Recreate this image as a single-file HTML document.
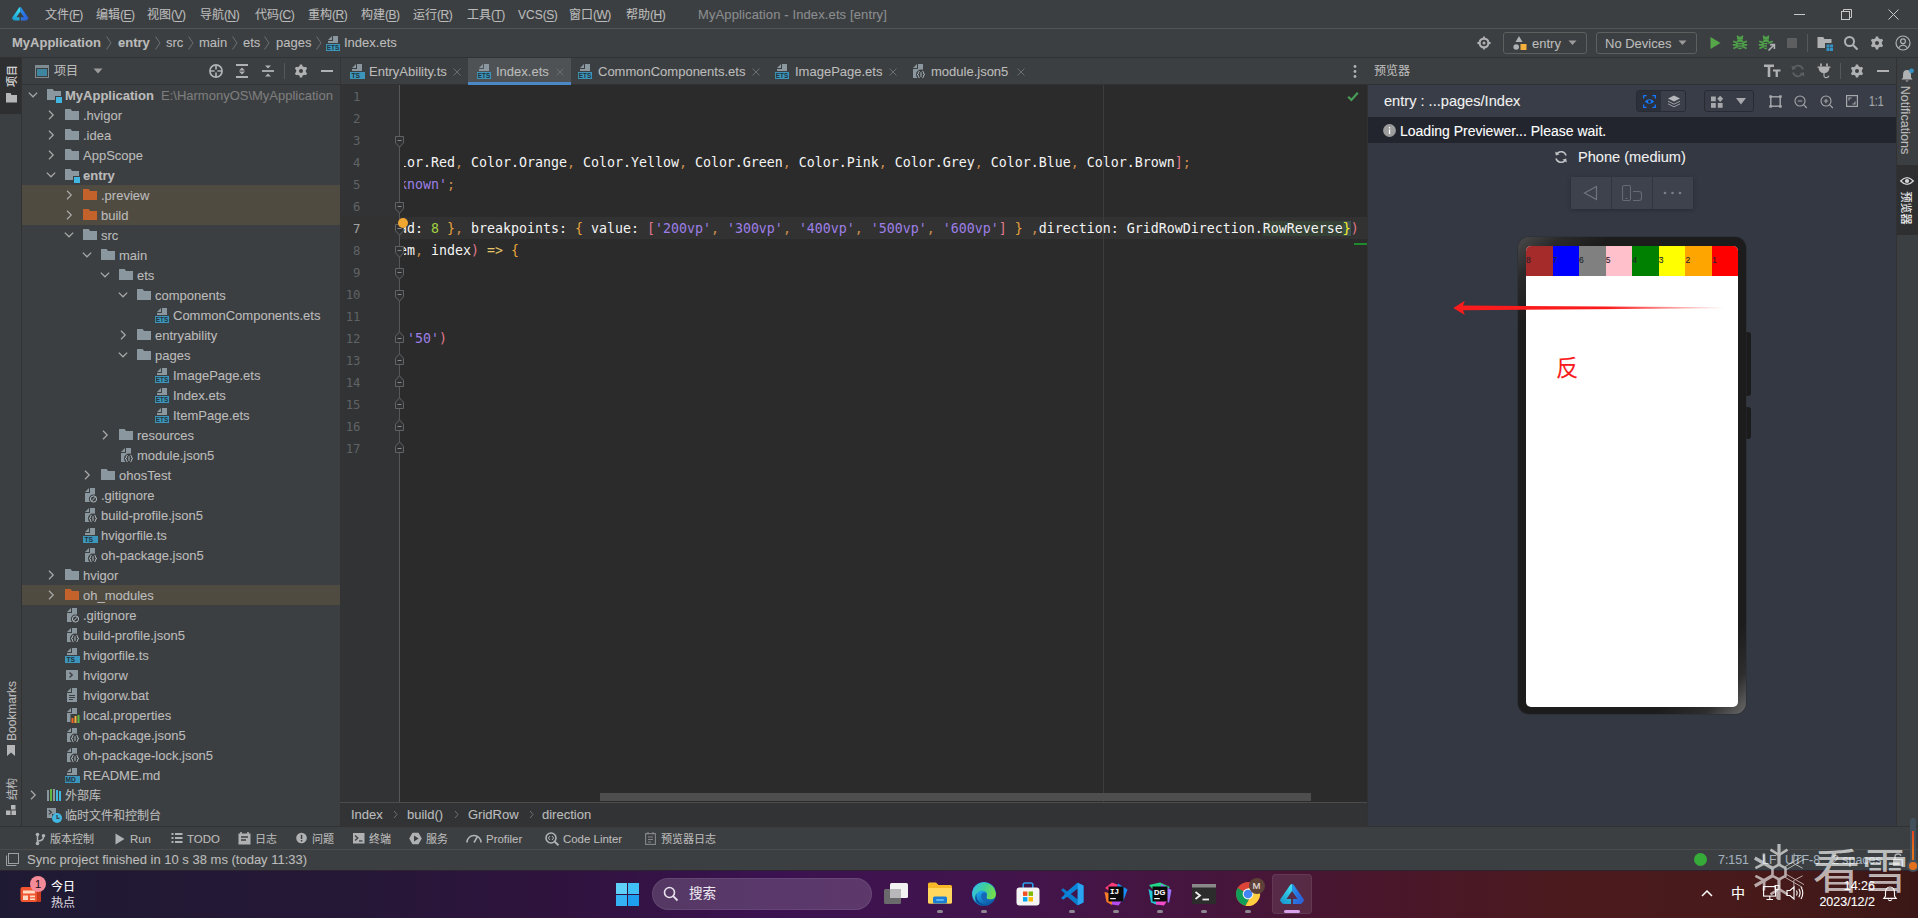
<!DOCTYPE html>
<html lang="zh-CN"><head><meta charset="utf-8"><title>MyApplication - Index.ets [entry]</title>
<style>
*{box-sizing:border-box}
html,body{margin:0;padding:0}
body{width:1918px;height:918px;overflow:hidden;background:#3c3f41;position:relative;font-family:"Liberation Sans","Noto Sans CJK SC",sans-serif;font-size:13px;color:#bbbbbb}
div,svg{position:absolute}
svg{overflow:visible}
.t{white-space:pre;-webkit-text-stroke:0.1px}
.c{white-space:pre;font-family:"DejaVu Sans Mono","Liberation Mono",monospace;font-size:13.29px;line-height:22px;height:22px;color:#f4f4f4}
</style></head>
<body>
<div style="left:0px;top:0px;width:1918px;height:28px;background:#3c3f41"></div>
<svg style="left:11.7px;top:6.9px;" width="16.4" height="13.6" viewBox="0 0 16.4 13.6"><defs><linearGradient id="lgA1" x1="0.6" y1="0" x2="0.2" y2="1"><stop offset="0" stop-color="#3ee0f2"/><stop offset="1" stop-color="#1896cc"/></linearGradient><linearGradient id="lgB1" x1="0" y1="0.3" x2="1" y2="0.8"><stop offset="0" stop-color="#2496e6"/><stop offset="0.5" stop-color="#2b6fe0"/><stop offset="1" stop-color="#2a62d8"/></linearGradient></defs><path d="M8.2,0 L7.2,0.4 L0.2,10.4 Q-0.2,11.2 0.4,11.9 L1.6,13.3 Q1.9,13.6 2.4,13.6 H7.5 V10.2 H4.4 L8.2,4.8 Z" fill="url(#lgA1)"/><path d="M8.2,0 L9.2,0.4 L16.2,10.4 Q16.6,11.2 16,11.9 L14.8,13.3 Q14.5,13.6 14,13.6 H8.9 V10.2 H12 L8.2,4.8 Z" fill="url(#lgB1)"/></svg>
<div class="t" style="left:45px;top:5px;font-size:12px;line-height:20px;height:20px;color:#bbbbbb;">文件<span style="letter-spacing:-0.5px">(<span style="text-decoration:underline;text-underline-offset:2px">F</span>)</span></div>
<div class="t" style="left:96px;top:5px;font-size:12px;line-height:20px;height:20px;color:#bbbbbb;">编辑<span style="letter-spacing:-0.5px">(<span style="text-decoration:underline;text-underline-offset:2px">E</span>)</span></div>
<div class="t" style="left:147px;top:5px;font-size:12px;line-height:20px;height:20px;color:#bbbbbb;">视图<span style="letter-spacing:-0.5px">(<span style="text-decoration:underline;text-underline-offset:2px">V</span>)</span></div>
<div class="t" style="left:200px;top:5px;font-size:12px;line-height:20px;height:20px;color:#bbbbbb;">导航<span style="letter-spacing:-0.5px">(<span style="text-decoration:underline;text-underline-offset:2px">N</span>)</span></div>
<div class="t" style="left:255px;top:5px;font-size:12px;line-height:20px;height:20px;color:#bbbbbb;">代码<span style="letter-spacing:-0.5px">(<span style="text-decoration:underline;text-underline-offset:2px">C</span>)</span></div>
<div class="t" style="left:308px;top:5px;font-size:12px;line-height:20px;height:20px;color:#bbbbbb;">重构<span style="letter-spacing:-0.5px">(<span style="text-decoration:underline;text-underline-offset:2px">R</span>)</span></div>
<div class="t" style="left:361px;top:5px;font-size:12px;line-height:20px;height:20px;color:#bbbbbb;">构建<span style="letter-spacing:-0.5px">(<span style="text-decoration:underline;text-underline-offset:2px">B</span>)</span></div>
<div class="t" style="left:413px;top:5px;font-size:12px;line-height:20px;height:20px;color:#bbbbbb;">运行<span style="letter-spacing:-0.5px">(<span style="text-decoration:underline;text-underline-offset:2px">R</span>)</span></div>
<div class="t" style="left:467px;top:5px;font-size:12px;line-height:20px;height:20px;color:#bbbbbb;">工具<span style="letter-spacing:-0.5px">(<span style="text-decoration:underline;text-underline-offset:2px">T</span>)</span></div>
<div class="t" style="left:518px;top:5px;font-size:12px;line-height:20px;height:20px;color:#bbbbbb;">VCS<span style="letter-spacing:-0.5px">(<span style="text-decoration:underline;text-underline-offset:2px">S</span>)</span></div>
<div class="t" style="left:569px;top:5px;font-size:12px;line-height:20px;height:20px;color:#bbbbbb;">窗口<span style="letter-spacing:-0.5px">(<span style="text-decoration:underline;text-underline-offset:2px">W</span>)</span></div>
<div class="t" style="left:626px;top:5px;font-size:12px;line-height:20px;height:20px;color:#bbbbbb;">帮助<span style="letter-spacing:-0.5px">(<span style="text-decoration:underline;text-underline-offset:2px">H</span>)</span></div>
<div class="t" style="left:698px;top:5px;font-size:13px;line-height:20px;height:20px;color:#8b8d8f;letter-spacing:0.12px">MyApplication - Index.ets [entry]</div>
<div style="left:1794px;top:14px;width:11px;height:1px;background:#c8c8c8"></div>
<svg style="left:1841px;top:9px;" width="11" height="11" viewBox="0 0 11 11"><path d="M2.5,2.5 V0.5 H10.5 V8.5 H8.5" fill="none" stroke="#c8c8c8" stroke-width="1"/><rect x="0.5" y="2.5" width="8" height="8" fill="none" stroke="#c8c8c8" stroke-width="1"/></svg>
<svg style="left:1888px;top:9px;" width="11" height="11" viewBox="0 0 11 11"><path d="M0.5,0.5 L10.5,10.5 M10.5,0.5 L0.5,10.5" stroke="#c8c8c8" stroke-width="1"/></svg>
<div style="left:0px;top:28px;width:1918px;height:1px;background:#515354"></div>
<div class="t" style="left:12px;top:33px;font-size:13px;line-height:20px;height:20px;color:#bbbbbb;font-weight:bold;">MyApplication</div>
<div class="t" style="left:118px;top:33px;font-size:13px;line-height:20px;height:20px;color:#bbbbbb;font-weight:bold;">entry</div>
<div class="t" style="left:166px;top:33px;font-size:13px;line-height:20px;height:20px;color:#bbbbbb;">src</div>
<div class="t" style="left:199px;top:33px;font-size:13px;line-height:20px;height:20px;color:#bbbbbb;">main</div>
<div class="t" style="left:243px;top:33px;font-size:13px;line-height:20px;height:20px;color:#bbbbbb;">ets</div>
<div class="t" style="left:276px;top:33px;font-size:13px;line-height:20px;height:20px;color:#bbbbbb;">pages</div>
<svg style="left:105px;top:35px;" width="8" height="16" viewBox="0 0 8 16"><path d="M1.5,1.5 L6,8 L1.5,14.5" stroke="#6e7072" stroke-width="1" fill="none"/></svg>
<svg style="left:154px;top:35px;" width="8" height="16" viewBox="0 0 8 16"><path d="M1.5,1.5 L6,8 L1.5,14.5" stroke="#6e7072" stroke-width="1" fill="none"/></svg>
<svg style="left:187px;top:35px;" width="8" height="16" viewBox="0 0 8 16"><path d="M1.5,1.5 L6,8 L1.5,14.5" stroke="#6e7072" stroke-width="1" fill="none"/></svg>
<svg style="left:231px;top:35px;" width="8" height="16" viewBox="0 0 8 16"><path d="M1.5,1.5 L6,8 L1.5,14.5" stroke="#6e7072" stroke-width="1" fill="none"/></svg>
<svg style="left:263px;top:35px;" width="8" height="16" viewBox="0 0 8 16"><path d="M1.5,1.5 L6,8 L1.5,14.5" stroke="#6e7072" stroke-width="1" fill="none"/></svg>
<svg style="left:315px;top:35px;" width="8" height="16" viewBox="0 0 8 16"><path d="M1.5,1.5 L6,8 L1.5,14.5" stroke="#6e7072" stroke-width="1" fill="none"/></svg>
<svg style="left:325px;top:35px" width="16" height="16" viewBox="0 0 16 16"><path d="M7,1 L3,5 H7 Z" fill="#8a979e"/><path d="M8,1 V6 H3 V8 H13 V1 Z" fill="#8a979e"/><rect x="1" y="9" width="14" height="7" fill="#3c95ba"/><text x="8.0" y="15" text-anchor="middle" font-family="Liberation Sans,sans-serif" font-weight="bold" font-size="6.4" fill="#22323b">ETS</text></svg>
<div class="t" style="left:344px;top:33px;font-size:13px;line-height:20px;height:20px;color:#bbbbbb;">Index.ets</div>
<svg style="left:1476px;top:35px;" width="16" height="16" viewBox="0 0 16 16"><circle cx="8" cy="8" r="4.4" fill="none" stroke="#afb1b3" stroke-width="2.2"/><circle cx="8" cy="8" r="1.5" fill="#afb1b3"/><path d="M8,1.4 V3 M8,13 V14.6 M1.4,8 H3 M13,8 H14.6" stroke="#afb1b3" stroke-width="1.8"/></svg>
<div style="left:1503px;top:32px;width:84px;height:22px;border:1px solid #5e6060;border-radius:3px"></div>
<svg style="left:1512px;top:35px;" width="16" height="16" viewBox="0 0 16 16"><path d="M7,1 L10.5,7 H3.5 Z" fill="#afb1b3"/><circle cx="4.2" cy="12" r="2.8" fill="#afb1b3"/><rect x="8.5" y="9" width="6" height="6" fill="#f4af3d"/></svg>
<div class="t" style="left:1532px;top:34px;font-size:13px;line-height:20px;height:20px;color:#bbbbbb;">entry</div>
<svg style="left:1568px;top:40px;" width="9" height="6" viewBox="0 0 9 6"><path d="M0.5,0.5 H8.5 L4.5,5 Z" fill="#9b9b9b"/></svg>
<div style="left:1596px;top:32px;width:101px;height:22px;border:1px solid #5e6060;border-radius:3px"></div>
<div class="t" style="left:1605px;top:34px;font-size:13px;line-height:20px;height:20px;color:#bbbbbb;">No Devices</div>
<svg style="left:1678px;top:40px;" width="9" height="6" viewBox="0 0 9 6"><path d="M0.5,0.5 H8.5 L4.5,5 Z" fill="#9b9b9b"/></svg>
<svg style="left:1707px;top:35px;" width="16" height="16" viewBox="0 0 16 16"><path d="M3.5,2 L13.5,8 L3.5,14 Z" fill="#57a64a"/></svg>
<svg style="left:1732px;top:35px;" width="16" height="16" viewBox="0 0 16 16"><ellipse cx="8" cy="9.3" rx="4.1" ry="5" fill="#4fa24a"/><path d="M4.9,4.4 A3.1,2.8 0 0 1 11.1,4.4 Z" fill="#4fa24a"/><path d="M1.2,6.2 L4.6,7.6 M0.8,9.8 H4.4 M1.4,13.6 L4.8,11.8 M14.8,6.2 L11.4,7.6 M15.2,9.8 H11.6 M14.6,13.6 L11.2,11.8 M5.2,0.8 L6.6,3 M10.8,0.8 L9.4,3" stroke="#4fa24a" stroke-width="1.7"/><path d="M5.6,7.4 H10.4 M5.6,9.8 H10.4 M5.6,12.2 H10.4" stroke="#3c3f41" stroke-width="1"/></svg>
<svg style="left:1758px;top:35px;" width="18" height="16" viewBox="0 0 18 16"><ellipse cx="8" cy="9.3" rx="4.1" ry="5" fill="#4fa24a"/><path d="M4.9,4.4 A3.1,2.8 0 0 1 11.1,4.4 Z" fill="#4fa24a"/><path d="M1.2,6.2 L4.6,7.6 M0.8,9.8 H4.4 M1.4,13.6 L4.8,11.8 M14.8,6.2 L11.4,7.6 M15.2,9.8 H11.6 M14.6,13.6 L11.2,11.8 M5.2,0.8 L6.6,3 M10.8,0.8 L9.4,3" stroke="#4fa24a" stroke-width="1.7"/><path d="M5.6,7.4 H10.4 M5.6,9.8 H10.4 M5.6,12.2 H10.4" stroke="#3c3f41" stroke-width="1"/><rect x="9" y="8.5" width="9" height="8" fill="#3c3f41"/><path d="M10.5,15.5 L16,10 M12,9.6 H16.4 V14" stroke="#afb1b3" stroke-width="1.6" fill="none"/></svg>
<div style="left:1787px;top:38px;width:10px;height:10px;background:#5c5e60"></div>
<div style="left:1807px;top:34px;width:1px;height:18px;background:#555759"></div>
<svg style="left:1817px;top:35px;" width="16" height="16" viewBox="0 0 16 16"><path d="M0.5,13 H8 V8 H14.5 V4 H7.5 L6.2,2 H0.5 Z" fill="#afb1b3"/><rect x="9.5" y="9.5" width="3" height="3" fill="#3592c4"/><rect x="13" y="9.5" width="3" height="3" fill="#3592c4"/><rect x="9.5" y="13" width="3" height="3" fill="#3592c4"/><rect x="13" y="13" width="3" height="3" fill="#3592c4"/></svg>
<svg style="left:1843px;top:35px;" width="16" height="16" viewBox="0 0 16 16"><circle cx="6.5" cy="6.5" r="4.5" fill="none" stroke="#afb1b3" stroke-width="2"/><path d="M10,10 L14.5,14.5" stroke="#afb1b3" stroke-width="2.2"/></svg>
<svg style="left:1869px;top:35px;" width="16" height="16" viewBox="0 0 16 16"><path d="M6.3,4 L6.9,1.6 H9.1 L9.7,4 Z" fill="#afb1b3" transform="rotate(0 8 8)"/><path d="M6.3,4 L6.9,1.6 H9.1 L9.7,4 Z" fill="#afb1b3" transform="rotate(60 8 8)"/><path d="M6.3,4 L6.9,1.6 H9.1 L9.7,4 Z" fill="#afb1b3" transform="rotate(120 8 8)"/><path d="M6.3,4 L6.9,1.6 H9.1 L9.7,4 Z" fill="#afb1b3" transform="rotate(180 8 8)"/><path d="M6.3,4 L6.9,1.6 H9.1 L9.7,4 Z" fill="#afb1b3" transform="rotate(240 8 8)"/><path d="M6.3,4 L6.9,1.6 H9.1 L9.7,4 Z" fill="#afb1b3" transform="rotate(300 8 8)"/><circle cx="8" cy="8" r="4.9" fill="#afb1b3"/><circle cx="8" cy="8" r="2" fill="#3c3f41"/></svg>
<svg style="left:1895px;top:35px;" width="16" height="16" viewBox="0 0 16 16"><circle cx="8" cy="8" r="7" fill="none" stroke="#afb1b3" stroke-width="1.2"/><circle cx="8" cy="6.2" r="2.4" fill="none" stroke="#afb1b3" stroke-width="1.2"/><path d="M3.6,12.8 Q8,7.5 12.4,12.8" fill="none" stroke="#afb1b3" stroke-width="1.2"/></svg>
<div style="left:0px;top:57px;width:1918px;height:1px;background:#323232"></div>
<div style="left:0px;top:58px;width:22px;height:768px;background:#3c3f41"></div>
<div style="left:0px;top:58px;width:21px;height:56px;background:#2d2f30"></div>
<div style="left:21px;top:58px;width:1px;height:768px;background:#323232"></div>
<div class="t" style="left:-38.5px;top:66.0px;width:100px;height:20px;text-align:center;font-size:11px;line-height:20px;color:#e0e0e0;transform:rotate(-90deg);">项目</div>
<svg style="left:6px;top:93px;" width="11" height="9.5" viewBox="0 0 11 9.5"><path d="M0,9.5 H11 V2 H5.5 L4.5,0 H0 Z" fill="#b4b6b8"/></svg>
<div class="t" style="left:-38.5px;top:701.0px;width:100px;height:20px;text-align:center;font-size:12px;line-height:20px;color:#bbbbbb;transform:rotate(-90deg);">Bookmarks</div>
<svg style="left:7px;top:745px;" width="8" height="11" viewBox="0 0 8 11"><path d="M0,0 H8 V11 L4,7.6 L0,11 Z" fill="#b4b6b8"/></svg>
<div class="t" style="left:-38.5px;top:779.0px;width:100px;height:20px;text-align:center;font-size:11px;line-height:20px;color:#bbbbbb;transform:rotate(-90deg);">结构</div>
<svg style="left:6px;top:805px;" width="10" height="10" viewBox="0 0 10 10"><rect x="5" y="0" width="4.5" height="4.5" fill="#b4b6b8"/><rect x="0" y="5.5" width="4.5" height="4.5" fill="#b4b6b8"/><rect x="5.5" y="5.5" width="4.5" height="4.5" fill="#b4b6b8"/></svg>
<div style="left:22px;top:58px;width:318px;height:768px;background:#3c3f41"></div>
<svg style="left:35px;top:65px;" width="14" height="13" viewBox="0 0 14 13"><rect x="0" y="0" width="14" height="13" fill="#7f8b91"/><rect x="1" y="3" width="12" height="9" fill="#3c3f41"/><rect x="2" y="4" width="10" height="7" fill="#3e86a0"/></svg>
<div class="t" style="left:54px;top:61px;font-size:12px;line-height:20px;height:20px;color:#bbbbbb;">项目</div>
<svg style="left:93px;top:68px;" width="10" height="6" viewBox="0 0 10 6"><path d="M0.5,0.5 H9.5 L5,5.5 Z" fill="#9b9b9b"/></svg>
<svg style="left:208px;top:63px;" width="16" height="16" viewBox="0 0 16 16"><circle cx="8" cy="8" r="6.1" fill="none" stroke="#afb1b3" stroke-width="1.7"/><path d="M8,2 V6.6 M8,9.4 V14 M2,8 H6.6 M9.4,8 H14" stroke="#afb1b3" stroke-width="1.7"/></svg>
<svg style="left:234px;top:63px;" width="16" height="16" viewBox="0 0 16 16"><path d="M2,2 H14 M2,14 H14" stroke="#afb1b3" stroke-width="1.8"/><path d="M8,4.6 L11,7.4 H5 Z M8,11.4 L11,8.6 H5 Z" fill="#afb1b3"/></svg>
<svg style="left:260px;top:63px;" width="16" height="16" viewBox="0 0 16 16"><path d="M2,8 H14" stroke="#afb1b3" stroke-width="1.8"/><path d="M8,5.6 L11,2.6 H5 Z M8,10.4 L11,13.4 H5 Z" fill="#afb1b3"/></svg>
<div style="left:284px;top:63px;width:1px;height:16px;background:#555759"></div>
<svg style="left:293px;top:63px;" width="16" height="16" viewBox="0 0 16 16"><path d="M6.3,4 L6.9,1.6 H9.1 L9.7,4 Z" fill="#afb1b3" transform="rotate(0 8 8)"/><path d="M6.3,4 L6.9,1.6 H9.1 L9.7,4 Z" fill="#afb1b3" transform="rotate(60 8 8)"/><path d="M6.3,4 L6.9,1.6 H9.1 L9.7,4 Z" fill="#afb1b3" transform="rotate(120 8 8)"/><path d="M6.3,4 L6.9,1.6 H9.1 L9.7,4 Z" fill="#afb1b3" transform="rotate(180 8 8)"/><path d="M6.3,4 L6.9,1.6 H9.1 L9.7,4 Z" fill="#afb1b3" transform="rotate(240 8 8)"/><path d="M6.3,4 L6.9,1.6 H9.1 L9.7,4 Z" fill="#afb1b3" transform="rotate(300 8 8)"/><circle cx="8" cy="8" r="4.9" fill="#afb1b3"/><circle cx="8" cy="8" r="2" fill="#3c3f41"/></svg>
<div style="left:321px;top:70px;width:12px;height:2px;background:#afb1b3"></div>
<div style="left:22px;top:84px;width:318px;height:1px;background:#323232"></div>
<svg style="left:25px;top:87px" width="16" height="16" viewBox="0 0 16 16"><path d="M3.8,5.6 L8,9.8 L12.2,5.6" stroke="#a8a8a8" stroke-width="1.25" fill="none"/></svg>
<svg style="left:46px;top:87px" width="16" height="16" viewBox="0 0 16 16"><path d="M1,13 H9 V9 H15 V4 H8 L6.7,2 H1 Z" fill="#8a979e"/><rect x="10" y="10" width="6" height="6" fill="#40b6e0"/></svg>
<div class="t" style="left:65px;top:86px;font-size:13px;line-height:20px;height:20px;color:#bbbbbb;font-weight:bold;">MyApplication</div>
<div class="t" style="left:161px;top:86px;font-size:13px;line-height:20px;height:20px;color:#7d7d7d;">E:\HarmonyOS\MyApplication</div>
<svg style="left:43px;top:107px" width="16" height="16" viewBox="0 0 16 16"><path d="M6,3.8 L10.2,8 L6,12.2" stroke="#a8a8a8" stroke-width="1.25" fill="none"/></svg>
<svg style="left:64px;top:107px" width="16" height="16" viewBox="0 0 16 16"><path d="M1,13 H15 V4 H8 L6.7,2 H1 Z" fill="#8a979e"/></svg>
<div class="t" style="left:83px;top:106px;font-size:13px;line-height:20px;height:20px;color:#bbbbbb;">.hvigor</div>
<svg style="left:43px;top:127px" width="16" height="16" viewBox="0 0 16 16"><path d="M6,3.8 L10.2,8 L6,12.2" stroke="#a8a8a8" stroke-width="1.25" fill="none"/></svg>
<svg style="left:64px;top:127px" width="16" height="16" viewBox="0 0 16 16"><path d="M1,13 H15 V4 H8 L6.7,2 H1 Z" fill="#8a979e"/></svg>
<div class="t" style="left:83px;top:126px;font-size:13px;line-height:20px;height:20px;color:#bbbbbb;">.idea</div>
<svg style="left:43px;top:147px" width="16" height="16" viewBox="0 0 16 16"><path d="M6,3.8 L10.2,8 L6,12.2" stroke="#a8a8a8" stroke-width="1.25" fill="none"/></svg>
<svg style="left:64px;top:147px" width="16" height="16" viewBox="0 0 16 16"><path d="M1,13 H15 V4 H8 L6.7,2 H1 Z" fill="#8a979e"/></svg>
<div class="t" style="left:83px;top:146px;font-size:13px;line-height:20px;height:20px;color:#bbbbbb;">AppScope</div>
<svg style="left:43px;top:167px" width="16" height="16" viewBox="0 0 16 16"><path d="M3.8,5.6 L8,9.8 L12.2,5.6" stroke="#a8a8a8" stroke-width="1.25" fill="none"/></svg>
<svg style="left:64px;top:167px" width="16" height="16" viewBox="0 0 16 16"><path d="M1,13 H9 V9 H15 V4 H8 L6.7,2 H1 Z" fill="#8a979e"/><rect x="10" y="10" width="6" height="6" fill="#40b6e0"/></svg>
<div class="t" style="left:83px;top:166px;font-size:13px;line-height:20px;height:20px;color:#bbbbbb;font-weight:bold;">entry</div>
<div style="left:22px;top:185px;width:318px;height:20px;background:#4f4b41"></div>
<svg style="left:61px;top:187px" width="16" height="16" viewBox="0 0 16 16"><path d="M6,3.8 L10.2,8 L6,12.2" stroke="#a8a8a8" stroke-width="1.25" fill="none"/></svg>
<svg style="left:82px;top:187px" width="16" height="16" viewBox="0 0 16 16"><path d="M1,13 H15 V4 H8 L6.7,2 H1 Z" fill="#c4622c"/></svg>
<div class="t" style="left:101px;top:186px;font-size:13px;line-height:20px;height:20px;color:#bbbbbb;">.preview</div>
<div style="left:22px;top:205px;width:318px;height:20px;background:#4f4b41"></div>
<svg style="left:61px;top:207px" width="16" height="16" viewBox="0 0 16 16"><path d="M6,3.8 L10.2,8 L6,12.2" stroke="#a8a8a8" stroke-width="1.25" fill="none"/></svg>
<svg style="left:82px;top:207px" width="16" height="16" viewBox="0 0 16 16"><path d="M1,13 H15 V4 H8 L6.7,2 H1 Z" fill="#c4622c"/></svg>
<div class="t" style="left:101px;top:206px;font-size:13px;line-height:20px;height:20px;color:#bbbbbb;">build</div>
<svg style="left:61px;top:227px" width="16" height="16" viewBox="0 0 16 16"><path d="M3.8,5.6 L8,9.8 L12.2,5.6" stroke="#a8a8a8" stroke-width="1.25" fill="none"/></svg>
<svg style="left:82px;top:227px" width="16" height="16" viewBox="0 0 16 16"><path d="M1,13 H15 V4 H8 L6.7,2 H1 Z" fill="#8a979e"/></svg>
<div class="t" style="left:101px;top:226px;font-size:13px;line-height:20px;height:20px;color:#bbbbbb;">src</div>
<svg style="left:79px;top:247px" width="16" height="16" viewBox="0 0 16 16"><path d="M3.8,5.6 L8,9.8 L12.2,5.6" stroke="#a8a8a8" stroke-width="1.25" fill="none"/></svg>
<svg style="left:100px;top:247px" width="16" height="16" viewBox="0 0 16 16"><path d="M1,13 H15 V4 H8 L6.7,2 H1 Z" fill="#8a979e"/></svg>
<div class="t" style="left:119px;top:246px;font-size:13px;line-height:20px;height:20px;color:#bbbbbb;">main</div>
<svg style="left:97px;top:267px" width="16" height="16" viewBox="0 0 16 16"><path d="M3.8,5.6 L8,9.8 L12.2,5.6" stroke="#a8a8a8" stroke-width="1.25" fill="none"/></svg>
<svg style="left:118px;top:267px" width="16" height="16" viewBox="0 0 16 16"><path d="M1,13 H15 V4 H8 L6.7,2 H1 Z" fill="#8a979e"/></svg>
<div class="t" style="left:137px;top:266px;font-size:13px;line-height:20px;height:20px;color:#bbbbbb;">ets</div>
<svg style="left:115px;top:287px" width="16" height="16" viewBox="0 0 16 16"><path d="M3.8,5.6 L8,9.8 L12.2,5.6" stroke="#a8a8a8" stroke-width="1.25" fill="none"/></svg>
<svg style="left:136px;top:287px" width="16" height="16" viewBox="0 0 16 16"><path d="M1,13 H15 V4 H8 L6.7,2 H1 Z" fill="#8a979e"/></svg>
<div class="t" style="left:155px;top:286px;font-size:13px;line-height:20px;height:20px;color:#bbbbbb;">components</div>
<svg style="left:154px;top:307px" width="16" height="16" viewBox="0 0 16 16"><path d="M7,1 L3,5 H7 Z" fill="#8a979e"/><path d="M8,1 V6 H3 V8 H13 V1 Z" fill="#8a979e"/><rect x="1" y="9" width="14" height="7" fill="#3c95ba"/><text x="8.0" y="15" text-anchor="middle" font-family="Liberation Sans,sans-serif" font-weight="bold" font-size="6.4" fill="#22323b">ETS</text></svg>
<div class="t" style="left:173px;top:306px;font-size:13px;line-height:20px;height:20px;color:#bbbbbb;">CommonComponents.ets</div>
<svg style="left:115px;top:327px" width="16" height="16" viewBox="0 0 16 16"><path d="M6,3.8 L10.2,8 L6,12.2" stroke="#a8a8a8" stroke-width="1.25" fill="none"/></svg>
<svg style="left:136px;top:327px" width="16" height="16" viewBox="0 0 16 16"><path d="M1,13 H15 V4 H8 L6.7,2 H1 Z" fill="#8a979e"/></svg>
<div class="t" style="left:155px;top:326px;font-size:13px;line-height:20px;height:20px;color:#bbbbbb;">entryability</div>
<svg style="left:115px;top:347px" width="16" height="16" viewBox="0 0 16 16"><path d="M3.8,5.6 L8,9.8 L12.2,5.6" stroke="#a8a8a8" stroke-width="1.25" fill="none"/></svg>
<svg style="left:136px;top:347px" width="16" height="16" viewBox="0 0 16 16"><path d="M1,13 H15 V4 H8 L6.7,2 H1 Z" fill="#8a979e"/></svg>
<div class="t" style="left:155px;top:346px;font-size:13px;line-height:20px;height:20px;color:#bbbbbb;">pages</div>
<svg style="left:154px;top:367px" width="16" height="16" viewBox="0 0 16 16"><path d="M7,1 L3,5 H7 Z" fill="#8a979e"/><path d="M8,1 V6 H3 V8 H13 V1 Z" fill="#8a979e"/><rect x="1" y="9" width="14" height="7" fill="#3c95ba"/><text x="8.0" y="15" text-anchor="middle" font-family="Liberation Sans,sans-serif" font-weight="bold" font-size="6.4" fill="#22323b">ETS</text></svg>
<div class="t" style="left:173px;top:366px;font-size:13px;line-height:20px;height:20px;color:#bbbbbb;">ImagePage.ets</div>
<svg style="left:154px;top:387px" width="16" height="16" viewBox="0 0 16 16"><path d="M7,1 L3,5 H7 Z" fill="#8a979e"/><path d="M8,1 V6 H3 V8 H13 V1 Z" fill="#8a979e"/><rect x="1" y="9" width="14" height="7" fill="#3c95ba"/><text x="8.0" y="15" text-anchor="middle" font-family="Liberation Sans,sans-serif" font-weight="bold" font-size="6.4" fill="#22323b">ETS</text></svg>
<div class="t" style="left:173px;top:386px;font-size:13px;line-height:20px;height:20px;color:#bbbbbb;">Index.ets</div>
<svg style="left:154px;top:407px" width="16" height="16" viewBox="0 0 16 16"><path d="M7,1 L3,5 H7 Z" fill="#8a979e"/><path d="M8,1 V6 H3 V8 H13 V1 Z" fill="#8a979e"/><rect x="1" y="9" width="14" height="7" fill="#3c95ba"/><text x="8.0" y="15" text-anchor="middle" font-family="Liberation Sans,sans-serif" font-weight="bold" font-size="6.4" fill="#22323b">ETS</text></svg>
<div class="t" style="left:173px;top:406px;font-size:13px;line-height:20px;height:20px;color:#bbbbbb;">ItemPage.ets</div>
<svg style="left:97px;top:427px" width="16" height="16" viewBox="0 0 16 16"><path d="M6,3.8 L10.2,8 L6,12.2" stroke="#a8a8a8" stroke-width="1.25" fill="none"/></svg>
<svg style="left:118px;top:427px" width="16" height="16" viewBox="0 0 16 16"><path d="M1,13 H15 V4 H8 L6.7,2 H1 Z" fill="#8a979e"/></svg>
<div class="t" style="left:137px;top:426px;font-size:13px;line-height:20px;height:20px;color:#bbbbbb;">resources</div>
<svg style="left:118px;top:447px" width="16" height="16" viewBox="0 0 16 16"><path d="M7,1 L3,5 H7 Z" fill="#8a979e"/><path d="M8,1 V6 H3 V15 H13 V1 Z" fill="#8a979e"/><circle cx="11" cy="11.5" r="5" fill="#3c3f41"/><path d="M9.6,8.3 Q8.3,8.3 8.4,9.8 Q8.5,11.4 7.2,11.5 Q8.5,11.6 8.4,13.2 Q8.3,14.7 9.6,14.7 M12.4,8.3 Q13.7,8.3 13.6,9.8 Q13.5,11.4 14.8,11.5 Q13.5,11.6 13.6,13.2 Q13.7,14.7 12.4,14.7" stroke="#aeb9c0" stroke-width="1" fill="none"/><rect x="10.5" y="9.2" width="1" height="4.6" fill="#aeb9c0"/></svg>
<div class="t" style="left:137px;top:446px;font-size:13px;line-height:20px;height:20px;color:#bbbbbb;">module.json5</div>
<svg style="left:79px;top:467px" width="16" height="16" viewBox="0 0 16 16"><path d="M6,3.8 L10.2,8 L6,12.2" stroke="#a8a8a8" stroke-width="1.25" fill="none"/></svg>
<svg style="left:100px;top:467px" width="16" height="16" viewBox="0 0 16 16"><path d="M1,13 H15 V4 H8 L6.7,2 H1 Z" fill="#8a979e"/></svg>
<div class="t" style="left:119px;top:466px;font-size:13px;line-height:20px;height:20px;color:#bbbbbb;">ohosTest</div>
<svg style="left:82px;top:487px" width="16" height="16" viewBox="0 0 16 16"><path d="M7,1 L3,5 H7 Z" fill="#8a979e"/><path d="M8,1 V6 H3 V15 H13 V1 Z" fill="#8a979e"/><circle cx="11.5" cy="12" r="4.6" fill="#3c3f41"/><circle cx="11.5" cy="12" r="3.1" stroke="#aeb9c0" stroke-width="1" fill="none"/><path d="M9.4,14.1 L13.6,9.9" stroke="#aeb9c0" stroke-width="1"/></svg>
<div class="t" style="left:101px;top:486px;font-size:13px;line-height:20px;height:20px;color:#bbbbbb;">.gitignore</div>
<svg style="left:82px;top:507px" width="16" height="16" viewBox="0 0 16 16"><path d="M7,1 L3,5 H7 Z" fill="#8a979e"/><path d="M8,1 V6 H3 V15 H13 V1 Z" fill="#8a979e"/><circle cx="11" cy="11.5" r="5" fill="#3c3f41"/><path d="M9.6,8.3 Q8.3,8.3 8.4,9.8 Q8.5,11.4 7.2,11.5 Q8.5,11.6 8.4,13.2 Q8.3,14.7 9.6,14.7 M12.4,8.3 Q13.7,8.3 13.6,9.8 Q13.5,11.4 14.8,11.5 Q13.5,11.6 13.6,13.2 Q13.7,14.7 12.4,14.7" stroke="#aeb9c0" stroke-width="1" fill="none"/><rect x="10.5" y="9.2" width="1" height="4.6" fill="#aeb9c0"/></svg>
<div class="t" style="left:101px;top:506px;font-size:13px;line-height:20px;height:20px;color:#bbbbbb;">build-profile.json5</div>
<svg style="left:82px;top:527px" width="16" height="16" viewBox="0 0 16 16"><path d="M7,1 L3,5 H7 Z" fill="#8a979e"/><path d="M8,1 V6 H3 V8 H13 V1 Z" fill="#8a979e"/><rect x="1" y="9" width="15" height="7" fill="#3c95ba"/><text x="6.6" y="15" text-anchor="middle" font-family="Liberation Sans,sans-serif" font-weight="bold" font-size="6.6" fill="#22323b">TS</text></svg>
<div class="t" style="left:101px;top:526px;font-size:13px;line-height:20px;height:20px;color:#bbbbbb;">hvigorfile.ts</div>
<svg style="left:82px;top:547px" width="16" height="16" viewBox="0 0 16 16"><path d="M7,1 L3,5 H7 Z" fill="#8a979e"/><path d="M8,1 V6 H3 V15 H13 V1 Z" fill="#8a979e"/><circle cx="11" cy="11.5" r="5" fill="#3c3f41"/><path d="M9.6,8.3 Q8.3,8.3 8.4,9.8 Q8.5,11.4 7.2,11.5 Q8.5,11.6 8.4,13.2 Q8.3,14.7 9.6,14.7 M12.4,8.3 Q13.7,8.3 13.6,9.8 Q13.5,11.4 14.8,11.5 Q13.5,11.6 13.6,13.2 Q13.7,14.7 12.4,14.7" stroke="#aeb9c0" stroke-width="1" fill="none"/><rect x="10.5" y="9.2" width="1" height="4.6" fill="#aeb9c0"/></svg>
<div class="t" style="left:101px;top:546px;font-size:13px;line-height:20px;height:20px;color:#bbbbbb;">oh-package.json5</div>
<svg style="left:43px;top:567px" width="16" height="16" viewBox="0 0 16 16"><path d="M6,3.8 L10.2,8 L6,12.2" stroke="#a8a8a8" stroke-width="1.25" fill="none"/></svg>
<svg style="left:64px;top:567px" width="16" height="16" viewBox="0 0 16 16"><path d="M1,13 H15 V4 H8 L6.7,2 H1 Z" fill="#8a979e"/></svg>
<div class="t" style="left:83px;top:566px;font-size:13px;line-height:20px;height:20px;color:#bbbbbb;">hvigor</div>
<div style="left:22px;top:585px;width:318px;height:20px;background:#4f4b41"></div>
<svg style="left:43px;top:587px" width="16" height="16" viewBox="0 0 16 16"><path d="M6,3.8 L10.2,8 L6,12.2" stroke="#a8a8a8" stroke-width="1.25" fill="none"/></svg>
<svg style="left:64px;top:587px" width="16" height="16" viewBox="0 0 16 16"><path d="M1,13 H15 V4 H8 L6.7,2 H1 Z" fill="#c4622c"/></svg>
<div class="t" style="left:83px;top:586px;font-size:13px;line-height:20px;height:20px;color:#bbbbbb;">oh_modules</div>
<svg style="left:64px;top:607px" width="16" height="16" viewBox="0 0 16 16"><path d="M7,1 L3,5 H7 Z" fill="#8a979e"/><path d="M8,1 V6 H3 V15 H13 V1 Z" fill="#8a979e"/><circle cx="11.5" cy="12" r="4.6" fill="#3c3f41"/><circle cx="11.5" cy="12" r="3.1" stroke="#aeb9c0" stroke-width="1" fill="none"/><path d="M9.4,14.1 L13.6,9.9" stroke="#aeb9c0" stroke-width="1"/></svg>
<div class="t" style="left:83px;top:606px;font-size:13px;line-height:20px;height:20px;color:#bbbbbb;">.gitignore</div>
<svg style="left:64px;top:627px" width="16" height="16" viewBox="0 0 16 16"><path d="M7,1 L3,5 H7 Z" fill="#8a979e"/><path d="M8,1 V6 H3 V15 H13 V1 Z" fill="#8a979e"/><circle cx="11" cy="11.5" r="5" fill="#3c3f41"/><path d="M9.6,8.3 Q8.3,8.3 8.4,9.8 Q8.5,11.4 7.2,11.5 Q8.5,11.6 8.4,13.2 Q8.3,14.7 9.6,14.7 M12.4,8.3 Q13.7,8.3 13.6,9.8 Q13.5,11.4 14.8,11.5 Q13.5,11.6 13.6,13.2 Q13.7,14.7 12.4,14.7" stroke="#aeb9c0" stroke-width="1" fill="none"/><rect x="10.5" y="9.2" width="1" height="4.6" fill="#aeb9c0"/></svg>
<div class="t" style="left:83px;top:626px;font-size:13px;line-height:20px;height:20px;color:#bbbbbb;">build-profile.json5</div>
<svg style="left:64px;top:647px" width="16" height="16" viewBox="0 0 16 16"><path d="M7,1 L3,5 H7 Z" fill="#8a979e"/><path d="M8,1 V6 H3 V8 H13 V1 Z" fill="#8a979e"/><rect x="1" y="9" width="15" height="7" fill="#3c95ba"/><text x="6.6" y="15" text-anchor="middle" font-family="Liberation Sans,sans-serif" font-weight="bold" font-size="6.6" fill="#22323b">TS</text></svg>
<div class="t" style="left:83px;top:646px;font-size:13px;line-height:20px;height:20px;color:#bbbbbb;">hvigorfile.ts</div>
<svg style="left:64px;top:667px" width="16" height="16" viewBox="0 0 16 16"><rect x="2" y="3" width="12" height="10" fill="#8a979e"/><path d="M5.5,5.5 L8.2,8 L5.5,10.5" stroke="#3c3f41" stroke-width="1.4" fill="none"/></svg>
<div class="t" style="left:83px;top:666px;font-size:13px;line-height:20px;height:20px;color:#bbbbbb;">hvigorw</div>
<svg style="left:64px;top:687px" width="16" height="16" viewBox="0 0 16 16"><path d="M7,1 L3,5 H7 Z" fill="#8a979e"/><path d="M8,1 V6 H3 V15 H13 V1 Z" fill="#8a979e"/><path d="M5,8.5 H11 M5,10.5 H11 M5,12.5 H9" stroke="#3c3f41" stroke-width="1"/></svg>
<div class="t" style="left:83px;top:686px;font-size:13px;line-height:20px;height:20px;color:#bbbbbb;">hvigorw.bat</div>
<svg style="left:64px;top:707px" width="16" height="16" viewBox="0 0 16 16"><path d="M7,1 L3,5 H7 Z" fill="#8a979e"/><path d="M8,1 V6 H3 V15 H13 V1 Z" fill="#8a979e"/><rect x="6.5" y="7" width="10" height="9.5" fill="#3c3f41"/><rect x="7.5" y="11" width="2" height="5" fill="#f26522"/><rect x="10.5" y="9" width="2" height="7" fill="#f4af3d"/><rect x="13.5" y="8" width="2" height="8" fill="#62b543"/></svg>
<div class="t" style="left:83px;top:706px;font-size:13px;line-height:20px;height:20px;color:#bbbbbb;">local.properties</div>
<svg style="left:64px;top:727px" width="16" height="16" viewBox="0 0 16 16"><path d="M7,1 L3,5 H7 Z" fill="#8a979e"/><path d="M8,1 V6 H3 V15 H13 V1 Z" fill="#8a979e"/><circle cx="11" cy="11.5" r="5" fill="#3c3f41"/><path d="M9.6,8.3 Q8.3,8.3 8.4,9.8 Q8.5,11.4 7.2,11.5 Q8.5,11.6 8.4,13.2 Q8.3,14.7 9.6,14.7 M12.4,8.3 Q13.7,8.3 13.6,9.8 Q13.5,11.4 14.8,11.5 Q13.5,11.6 13.6,13.2 Q13.7,14.7 12.4,14.7" stroke="#aeb9c0" stroke-width="1" fill="none"/><rect x="10.5" y="9.2" width="1" height="4.6" fill="#aeb9c0"/></svg>
<div class="t" style="left:83px;top:726px;font-size:13px;line-height:20px;height:20px;color:#bbbbbb;">oh-package.json5</div>
<svg style="left:64px;top:747px" width="16" height="16" viewBox="0 0 16 16"><path d="M7,1 L3,5 H7 Z" fill="#8a979e"/><path d="M8,1 V6 H3 V15 H13 V1 Z" fill="#8a979e"/><circle cx="11" cy="11.5" r="5" fill="#3c3f41"/><path d="M9.6,8.3 Q8.3,8.3 8.4,9.8 Q8.5,11.4 7.2,11.5 Q8.5,11.6 8.4,13.2 Q8.3,14.7 9.6,14.7 M12.4,8.3 Q13.7,8.3 13.6,9.8 Q13.5,11.4 14.8,11.5 Q13.5,11.6 13.6,13.2 Q13.7,14.7 12.4,14.7" stroke="#aeb9c0" stroke-width="1" fill="none"/><rect x="10.5" y="9.2" width="1" height="4.6" fill="#aeb9c0"/></svg>
<div class="t" style="left:83px;top:746px;font-size:13px;line-height:20px;height:20px;color:#bbbbbb;">oh-package-lock.json5</div>
<svg style="left:64px;top:767px" width="16" height="16" viewBox="0 0 16 16"><path d="M7,1 L3,5 H7 Z" fill="#8a979e"/><path d="M8,1 V6 H3 V8 H13 V1 Z" fill="#8a979e"/><rect x="1" y="9" width="15" height="7" fill="#3c95ba"/><text x="6.6" y="15" text-anchor="middle" font-family="Liberation Sans,sans-serif" font-weight="bold" font-size="6.6" fill="#22323b">MD</text></svg>
<div class="t" style="left:83px;top:766px;font-size:13px;line-height:20px;height:20px;color:#bbbbbb;">README.md</div>
<svg style="left:25px;top:787px" width="16" height="16" viewBox="0 0 16 16"><path d="M6,3.8 L10.2,8 L6,12.2" stroke="#a8a8a8" stroke-width="1.25" fill="none"/></svg>
<svg style="left:46px;top:787px" width="16" height="16" viewBox="0 0 16 16"><rect x="1" y="3" width="2" height="11" fill="#8a979e"/><rect x="4" y="2" width="2" height="12" fill="#62b543"/><rect x="7" y="2" width="2" height="12" fill="#8a979e"/><rect x="10" y="3" width="2" height="11" fill="#40b6e0"/><rect x="13" y="4" width="2" height="10" fill="#40b6e0"/></svg>
<div class="t" style="left:65px;top:786px;font-size:12px;line-height:20px;height:20px;color:#bbbbbb;">外部库</div>
<svg style="left:46px;top:807px" width="16" height="16" viewBox="0 0 16 16"><path d="M1,1 H10 V7 H6 V11 H1 Z" fill="#8a979e"/><path d="M2.8,3 L5.4,5.2 L2.8,7.4" stroke="#3c3f41" stroke-width="1.2" fill="none"/><circle cx="11" cy="11" r="5" fill="#40b6e0"/><path d="M11,8 V11.3 H13.5" stroke="#3c3f41" stroke-width="1.2" fill="none"/></svg>
<div class="t" style="left:65px;top:806px;font-size:12px;line-height:20px;height:20px;color:#bbbbbb;">临时文件和控制台</div>
<div style="left:340px;top:58px;width:1028px;height:27px;background:#3c3f41"></div>
<div style="left:468px;top:58px;width:103px;height:27px;background:#4e5254"></div>
<svg style="left:349px;top:63px" width="16" height="16" viewBox="0 0 16 16"><path d="M7,1 L3,5 H7 Z" fill="#8a979e"/><path d="M8,1 V6 H3 V8 H13 V1 Z" fill="#8a979e"/><rect x="1" y="9" width="15" height="7" fill="#3c95ba"/><text x="6.6" y="15" text-anchor="middle" font-family="Liberation Sans,sans-serif" font-weight="bold" font-size="6.6" fill="#22323b">TS</text></svg>
<div class="t" style="left:369px;top:62px;font-size:13px;line-height:20px;height:20px;color:#bbbbbb;">EntryAbility.ts</div>
<svg style="left:453px;top:67.5px;" width="8" height="8" viewBox="0 0 8 8"><path d="M0.5,0.5 L7.5,7.5 M7.5,0.5 L0.5,7.5" stroke="#6c6f71" stroke-width="1"/></svg>
<svg style="left:476px;top:63px" width="16" height="16" viewBox="0 0 16 16"><path d="M7,1 L3,5 H7 Z" fill="#8a979e"/><path d="M8,1 V6 H3 V8 H13 V1 Z" fill="#8a979e"/><rect x="1" y="9" width="14" height="7" fill="#3c95ba"/><text x="8.0" y="15" text-anchor="middle" font-family="Liberation Sans,sans-serif" font-weight="bold" font-size="6.4" fill="#22323b">ETS</text></svg>
<div class="t" style="left:496px;top:62px;font-size:13px;line-height:20px;height:20px;color:#bbbbbb;">Index.ets</div>
<svg style="left:556px;top:67.5px;" width="8" height="8" viewBox="0 0 8 8"><path d="M0.5,0.5 L7.5,7.5 M7.5,0.5 L0.5,7.5" stroke="#6c6f71" stroke-width="1"/></svg>
<svg style="left:577px;top:63px" width="16" height="16" viewBox="0 0 16 16"><path d="M7,1 L3,5 H7 Z" fill="#8a979e"/><path d="M8,1 V6 H3 V8 H13 V1 Z" fill="#8a979e"/><rect x="1" y="9" width="14" height="7" fill="#3c95ba"/><text x="8.0" y="15" text-anchor="middle" font-family="Liberation Sans,sans-serif" font-weight="bold" font-size="6.4" fill="#22323b">ETS</text></svg>
<div class="t" style="left:598px;top:62px;font-size:13px;line-height:20px;height:20px;color:#bbbbbb;">CommonComponents.ets</div>
<svg style="left:752px;top:67.5px;" width="8" height="8" viewBox="0 0 8 8"><path d="M0.5,0.5 L7.5,7.5 M7.5,0.5 L0.5,7.5" stroke="#6c6f71" stroke-width="1"/></svg>
<svg style="left:774px;top:63px" width="16" height="16" viewBox="0 0 16 16"><path d="M7,1 L3,5 H7 Z" fill="#8a979e"/><path d="M8,1 V6 H3 V8 H13 V1 Z" fill="#8a979e"/><rect x="1" y="9" width="14" height="7" fill="#3c95ba"/><text x="8.0" y="15" text-anchor="middle" font-family="Liberation Sans,sans-serif" font-weight="bold" font-size="6.4" fill="#22323b">ETS</text></svg>
<div class="t" style="left:795px;top:62px;font-size:13px;line-height:20px;height:20px;color:#bbbbbb;">ImagePage.ets</div>
<svg style="left:889px;top:67.5px;" width="8" height="8" viewBox="0 0 8 8"><path d="M0.5,0.5 L7.5,7.5 M7.5,0.5 L0.5,7.5" stroke="#6c6f71" stroke-width="1"/></svg>
<svg style="left:910px;top:63px" width="16" height="16" viewBox="0 0 16 16"><path d="M7,1 L3,5 H7 Z" fill="#8a979e"/><path d="M8,1 V6 H3 V15 H13 V1 Z" fill="#8a979e"/><circle cx="11" cy="11.5" r="5" fill="#3c3f41"/><path d="M9.6,8.3 Q8.3,8.3 8.4,9.8 Q8.5,11.4 7.2,11.5 Q8.5,11.6 8.4,13.2 Q8.3,14.7 9.6,14.7 M12.4,8.3 Q13.7,8.3 13.6,9.8 Q13.5,11.4 14.8,11.5 Q13.5,11.6 13.6,13.2 Q13.7,14.7 12.4,14.7" stroke="#aeb9c0" stroke-width="1" fill="none"/><rect x="10.5" y="9.2" width="1" height="4.6" fill="#aeb9c0"/></svg>
<div class="t" style="left:931px;top:62px;font-size:13px;line-height:20px;height:20px;color:#bbbbbb;">module.json5</div>
<svg style="left:1017px;top:67.5px;" width="8" height="8" viewBox="0 0 8 8"><path d="M0.5,0.5 L7.5,7.5 M7.5,0.5 L0.5,7.5" stroke="#6c6f71" stroke-width="1"/></svg>
<svg style="left:1353px;top:65px;" width="4" height="13" viewBox="0 0 4 13"><circle cx="2" cy="1.5" r="1.4" fill="#afb1b3"/><circle cx="2" cy="6.5" r="1.4" fill="#afb1b3"/><circle cx="2" cy="11.5" r="1.4" fill="#afb1b3"/></svg>
<div style="left:340px;top:84px;width:1028px;height:1px;background:#323232"></div>
<div style="left:468px;top:82px;width:103px;height:3px;background:#4a88c7"></div>
<div style="left:340px;top:58px;width:1px;height:768px;background:#333537"></div>
<div style="left:340px;top:85px;width:1027px;height:718px;background:#2b2b2b"></div>
<div style="left:340px;top:85px;width:59px;height:718px;background:#313335"></div>
<div style="left:1367px;top:85px;width:1px;height:741px;background:#323232"></div>
<div style="left:340px;top:217px;width:1027px;height:22px;background:#323232"></div>
<div style="left:1103px;top:85px;width:1px;height:718px;background:#3d3d3d"></div>
<div style="left:399px;top:85px;width:1px;height:718px;background:#555759"></div>
<div class="c" style="left:340px;top:86px;width:20.5px;text-align:right;color:#606366;font-size:12.3px">1</div>
<div class="c" style="left:340px;top:108px;width:20.5px;text-align:right;color:#606366;font-size:12.3px">2</div>
<div class="c" style="left:340px;top:130px;width:20.5px;text-align:right;color:#606366;font-size:12.3px">3</div>
<div class="c" style="left:340px;top:152px;width:20.5px;text-align:right;color:#606366;font-size:12.3px">4</div>
<div class="c" style="left:340px;top:174px;width:20.5px;text-align:right;color:#606366;font-size:12.3px">5</div>
<div class="c" style="left:340px;top:196px;width:20.5px;text-align:right;color:#606366;font-size:12.3px">6</div>
<div class="c" style="left:340px;top:218px;width:20.5px;text-align:right;color:#a4a3a3;font-size:12.3px">7</div>
<div class="c" style="left:340px;top:240px;width:20.5px;text-align:right;color:#606366;font-size:12.3px">8</div>
<div class="c" style="left:340px;top:262px;width:20.5px;text-align:right;color:#606366;font-size:12.3px">9</div>
<div class="c" style="left:340px;top:284px;width:20.5px;text-align:right;color:#606366;font-size:12.3px">10</div>
<div class="c" style="left:340px;top:306px;width:20.5px;text-align:right;color:#606366;font-size:12.3px">11</div>
<div class="c" style="left:340px;top:328px;width:20.5px;text-align:right;color:#606366;font-size:12.3px">12</div>
<div class="c" style="left:340px;top:350px;width:20.5px;text-align:right;color:#606366;font-size:12.3px">13</div>
<div class="c" style="left:340px;top:372px;width:20.5px;text-align:right;color:#606366;font-size:12.3px">14</div>
<div class="c" style="left:340px;top:394px;width:20.5px;text-align:right;color:#606366;font-size:12.3px">15</div>
<div class="c" style="left:340px;top:416px;width:20.5px;text-align:right;color:#606366;font-size:12.3px">16</div>
<div class="c" style="left:340px;top:438px;width:20.5px;text-align:right;color:#606366;font-size:12.3px">17</div>
<svg style="left:395.0px;top:136px;" width="9" height="12" viewBox="0 0 9 12"><path d="M0.5,0.5 H8.5 V6.8 L4.5,11.2 L0.5,6.8 Z" fill="#2f3133" stroke="#606365" stroke-width="1"/><path d="M2.5,4.5 H6.5" stroke="#85878a" stroke-width="1"/></svg>
<svg style="left:395.0px;top:202px;" width="9" height="12" viewBox="0 0 9 12"><path d="M0.5,0.5 H8.5 V6.8 L4.5,11.2 L0.5,6.8 Z" fill="#2f3133" stroke="#606365" stroke-width="1"/><path d="M2.5,4.5 H6.5" stroke="#85878a" stroke-width="1"/></svg>
<svg style="left:395.0px;top:224px;" width="9" height="12" viewBox="0 0 9 12"><path d="M0.5,0.5 H8.5 V6.8 L4.5,11.2 L0.5,6.8 Z" fill="#2f3133" stroke="#606365" stroke-width="1"/><path d="M2.5,4.5 H6.5" stroke="#85878a" stroke-width="1"/></svg>
<svg style="left:395.0px;top:246px;" width="9" height="12" viewBox="0 0 9 12"><path d="M0.5,0.5 H8.5 V6.8 L4.5,11.2 L0.5,6.8 Z" fill="#2f3133" stroke="#606365" stroke-width="1"/><path d="M2.5,4.5 H6.5" stroke="#85878a" stroke-width="1"/></svg>
<svg style="left:395.0px;top:268px;" width="9" height="12" viewBox="0 0 9 12"><path d="M0.5,0.5 H8.5 V6.8 L4.5,11.2 L0.5,6.8 Z" fill="#2f3133" stroke="#606365" stroke-width="1"/><path d="M2.5,4.5 H6.5" stroke="#85878a" stroke-width="1"/></svg>
<svg style="left:395.0px;top:290px;" width="9" height="12" viewBox="0 0 9 12"><path d="M0.5,0.5 H8.5 V6.8 L4.5,11.2 L0.5,6.8 Z" fill="#2f3133" stroke="#606365" stroke-width="1"/><path d="M2.5,4.5 H6.5" stroke="#85878a" stroke-width="1"/></svg>
<svg style="left:395.0px;top:331px;" width="9" height="12" viewBox="0 0 9 12"><path d="M0.5,11.5 H8.5 V5.2 L4.5,0.8 L0.5,5.2 Z" fill="#2f3133" stroke="#606365" stroke-width="1"/><path d="M2.5,7.5 H6.5" stroke="#85878a" stroke-width="1"/></svg>
<svg style="left:395.0px;top:353px;" width="9" height="12" viewBox="0 0 9 12"><path d="M0.5,11.5 H8.5 V5.2 L4.5,0.8 L0.5,5.2 Z" fill="#2f3133" stroke="#606365" stroke-width="1"/><path d="M2.5,7.5 H6.5" stroke="#85878a" stroke-width="1"/></svg>
<svg style="left:395.0px;top:375px;" width="9" height="12" viewBox="0 0 9 12"><path d="M0.5,11.5 H8.5 V5.2 L4.5,0.8 L0.5,5.2 Z" fill="#2f3133" stroke="#606365" stroke-width="1"/><path d="M2.5,7.5 H6.5" stroke="#85878a" stroke-width="1"/></svg>
<svg style="left:395.0px;top:397px;" width="9" height="12" viewBox="0 0 9 12"><path d="M0.5,11.5 H8.5 V5.2 L4.5,0.8 L0.5,5.2 Z" fill="#2f3133" stroke="#606365" stroke-width="1"/><path d="M2.5,7.5 H6.5" stroke="#85878a" stroke-width="1"/></svg>
<svg style="left:395.0px;top:419px;" width="9" height="12" viewBox="0 0 9 12"><path d="M0.5,11.5 H8.5 V5.2 L4.5,0.8 L0.5,5.2 Z" fill="#2f3133" stroke="#606365" stroke-width="1"/><path d="M2.5,7.5 H6.5" stroke="#85878a" stroke-width="1"/></svg>
<svg style="left:395.0px;top:441px;" width="9" height="12" viewBox="0 0 9 12"><path d="M0.5,11.5 H8.5 V5.2 L4.5,0.8 L0.5,5.2 Z" fill="#2f3133" stroke="#606365" stroke-width="1"/><path d="M2.5,7.5 H6.5" stroke="#85878a" stroke-width="1"/></svg>
<div style="left:404px;top:85px;width:963px;height:718px;overflow:hidden"><div class="c" style="left:-5px;top:67px"><span style="color:#f4f4f4">l</span><span style="color:#f4f4f4">or.Red</span><span style="color:#cf8e4d">, </span><span style="color:#f4f4f4">Color.Orange</span><span style="color:#cf8e4d">, </span><span style="color:#f4f4f4">Color.Yellow</span><span style="color:#cf8e4d">, </span><span style="color:#f4f4f4">Color.Green</span><span style="color:#cf8e4d">, </span><span style="color:#f4f4f4">Color.Pink</span><span style="color:#cf8e4d">, </span><span style="color:#f4f4f4">Color.Grey</span><span style="color:#cf8e4d">, </span><span style="color:#f4f4f4">Color.Blue</span><span style="color:#cf8e4d">, </span><span style="color:#f4f4f4">Color.Brown</span><span style="color:#e0788a">]</span><span style="color:#cf8e4d">;</span></div><div class="c" style="left:-5px;top:89px"><span style="color:#9d7fe6">known'</span><span style="color:#cf8e4d">;</span></div><div class="c" style="left:-5px;top:133px"><span style="color:#f4f4f4">ad: </span><span style="color:#9fcf3f">8</span> <span style="color:#e8a23c">}</span><span style="color:#cf8e4d">, </span><span style="color:#f4f4f4">breakpoints: </span><span style="color:#e8a23c">{</span><span style="color:#f4f4f4"> value: </span><span style="color:#e0788a">[</span><span style="color:#9d7fe6">'200vp'</span><span style="color:#cf8e4d">, </span><span style="color:#9d7fe6">'300vp'</span><span style="color:#cf8e4d">, </span><span style="color:#9d7fe6">'400vp'</span><span style="color:#cf8e4d">, </span><span style="color:#9d7fe6">'500vp'</span><span style="color:#cf8e4d">, </span><span style="color:#9d7fe6">'600vp'</span><span style="color:#e0788a">]</span> <span style="color:#e8a23c">}</span> <span style="color:#cf8e4d">,</span><span style="color:#f4f4f4">direction: GridRowDirection.</span><span style="background:#344134">RowReverse</span><span style="background:#3b514d;color:#ffef28">}</span><span style="color:#e0788a">)</span></div><div class="c" style="left:-5px;top:155px"><span style="color:#f4f4f4">em</span><span style="color:#cf8e4d">, </span><span style="color:#f4f4f4">index</span><span style="color:#e0788a">)</span> <span style="color:#e6c76a">=&gt;</span> <span style="color:#e8a23c">{</span></div><div class="c" style="left:-5px;top:243px"><span style="color:#e0788a;position:relative;left:-1.6px">(</span><span style="color:#9d7fe6">'50'</span><span style="color:#e0788a">)</span></div></div>
<div style="left:397.7px;top:217.7px;width:10.4px;height:10.4px;background:#f0a732;border-radius:50%"></div>
<svg style="left:1347px;top:91px;" width="12" height="11" viewBox="0 0 12 11"><path d="M1.2,5.8 L4.4,9 L10.8,1.8" stroke="#499c54" stroke-width="2.2" fill="none"/></svg>
<div style="left:1354px;top:243px;width:13px;height:2px;background:#1f8a2b"></div>
<div style="left:600px;top:793px;width:711px;height:8px;background:#4e4e4e"></div>
<div style="left:340px;top:802px;width:1027px;height:1px;background:#4a4c4e"></div>
<div style="left:340px;top:803px;width:1027px;height:24px;background:#313335"></div>
<div class="t" style="left:351px;top:805px;font-size:13px;line-height:20px;height:20px;color:#bbbbbb;">Index</div>
<div class="t" style="left:407px;top:805px;font-size:13px;line-height:20px;height:20px;color:#bbbbbb;">build()</div>
<div class="t" style="left:468px;top:805px;font-size:13px;line-height:20px;height:20px;color:#bbbbbb;">GridRow</div>
<div class="t" style="left:542px;top:805px;font-size:13px;line-height:20px;height:20px;color:#bbbbbb;">direction</div>
<svg style="left:393px;top:810px;" width="5" height="9" viewBox="0 0 5 9"><path d="M1,1 L4,4.5 L1,8" stroke="#6e7072" stroke-width="1" fill="none"/></svg>
<svg style="left:454px;top:810px;" width="5" height="9" viewBox="0 0 5 9"><path d="M1,1 L4,4.5 L1,8" stroke="#6e7072" stroke-width="1" fill="none"/></svg>
<svg style="left:529px;top:810px;" width="5" height="9" viewBox="0 0 5 9"><path d="M1,1 L4,4.5 L1,8" stroke="#6e7072" stroke-width="1" fill="none"/></svg>
<div style="left:1368px;top:58px;width:528px;height:27px;background:#3c3f41"></div>
<div class="t" style="left:1374px;top:61px;font-size:12px;line-height:20px;height:20px;color:#bbbbbb;">预览器</div>
<svg style="left:1764px;top:64px;" width="17" height="14" viewBox="0 0 17 14"><path d="M0,0.5 H10 V3 H6.3 V13 H3.7 V3 H0 Z" fill="#afb1b3"/><path d="M9,5.5 H16.5 V7.6 H13.9 V13 H11.6 V7.6 H9 Z" fill="#afb1b3"/></svg>
<svg style="left:1790px;top:63px;" width="16" height="16" viewBox="0 0 16 16"><path d="M13,6.5 A5.3,5.3 0 0 0 3.4,5.2 M3,9.5 A5.3,5.3 0 0 0 12.6,10.8" fill="none" stroke="#5c5f61" stroke-width="1.8"/><path d="M1.5,2.5 L2.2,7 L6.5,5.6 Z M14.5,13.5 L13.8,9 L9.5,10.4 Z" fill="#5c5f61"/></svg>
<svg style="left:1816px;top:63px;" width="16" height="16" viewBox="0 0 16 16"><path d="M1.5,3.4 H14.5 V4.8 H13.4 Q13.4,9.8 8,10.2 Q2.6,9.8 2.6,4.8 H1.5 Z" fill="#afb1b3"/><path d="M5,0.5 V3.5 M11,0.5 V3.5" stroke="#afb1b3" stroke-width="1.7"/><path d="M8,10 V12.4 Q8,14.8 10.4,14.6 Q12.4,14.4 13,12.8" stroke="#afb1b3" stroke-width="1.1" fill="none"/></svg>
<div style="left:1840px;top:63px;width:1px;height:16px;background:#555759"></div>
<svg style="left:1849px;top:63px;" width="16" height="16" viewBox="0 0 16 16"><path d="M6.3,4 L6.9,1.6 H9.1 L9.7,4 Z" fill="#afb1b3" transform="rotate(0 8 8)"/><path d="M6.3,4 L6.9,1.6 H9.1 L9.7,4 Z" fill="#afb1b3" transform="rotate(60 8 8)"/><path d="M6.3,4 L6.9,1.6 H9.1 L9.7,4 Z" fill="#afb1b3" transform="rotate(120 8 8)"/><path d="M6.3,4 L6.9,1.6 H9.1 L9.7,4 Z" fill="#afb1b3" transform="rotate(180 8 8)"/><path d="M6.3,4 L6.9,1.6 H9.1 L9.7,4 Z" fill="#afb1b3" transform="rotate(240 8 8)"/><path d="M6.3,4 L6.9,1.6 H9.1 L9.7,4 Z" fill="#afb1b3" transform="rotate(300 8 8)"/><circle cx="8" cy="8" r="4.9" fill="#afb1b3"/><circle cx="8" cy="8" r="2" fill="#3c3f41"/></svg>
<div style="left:1877px;top:70px;width:12px;height:2px;background:#afb1b3"></div>
<div style="left:1368px;top:84px;width:528px;height:1px;background:#2e3033"></div>
<div style="left:1368px;top:85px;width:528px;height:32px;background:#393d47"></div>
<div class="t" style="left:1384px;top:90px;font-size:14.6px;line-height:22px;height:22px;color:#f0f0f0;">entry : ...pages/Index</div>
<div style="left:1636px;top:90px;width:50px;height:22px;background:#2c303a;border:1px solid #282b33;border-radius:3px"></div>
<div style="left:1661px;top:91px;width:24px;height:20px;background:#3b3f49;border-radius:0 2px 2px 0"></div>
<svg style="left:1642.5px;top:94.5px;" width="13" height="13" viewBox="0 0 13 13"><path d="M0.7,3.6 V0.7 H3.6 M9.4,0.7 H12.3 V3.6 M12.3,9.4 V12.3 H9.4 M3.6,12.3 H0.7 V9.4" stroke="#1677ff" stroke-width="1.3" fill="none"/><path d="M1.8,6.5 Q6.5,1.8 11.2,6.5 Q6.5,11.2 1.8,6.5 Z" fill="#1677ff"/><circle cx="6.5" cy="6.5" r="1.5" fill="#2c303a"/></svg>
<svg style="left:1666.5px;top:94px;" width="14" height="14" viewBox="0 0 14 14"><path d="M7,1.5 L13,4.5 L7,7.5 L1,4.5 Z" fill="#b4b6ba"/><path d="M1,7.2 L7,10.2 L13,7.2 M1,9.8 L7,12.8 L13,9.8" stroke="#9c9ea3" stroke-width="1" fill="none"/></svg>
<div style="left:1704px;top:90px;width:50px;height:22px;background:#383c46;border:1px solid #282b33;border-radius:3px"></div>
<svg style="left:1711px;top:95.5px;" width="12" height="12" viewBox="0 0 12 12"><rect x="0" y="0.5" width="4.8" height="4.8" fill="#a6a8ab"/><rect x="0" y="7" width="4.8" height="4.8" fill="#a6a8ab"/><rect x="6.8" y="7" width="4.8" height="4.8" fill="#a6a8ab"/><path d="M9.2,-0.3 L12.2,2.8 L9.2,5.9 L6.2,2.8 Z" fill="#a6a8ab"/></svg>
<svg style="left:1736px;top:98px;" width="10" height="7" viewBox="0 0 10 7"><path d="M0,0 H10 L5,6.5 Z" fill="#a6a8ab"/></svg>
<svg style="left:1769px;top:95px;" width="13" height="13" viewBox="0 0 13 13"><rect x="1.8" y="1.8" width="9.4" height="9.4" fill="none" stroke="#a6a8ab" stroke-width="1.4"/><rect x="0.3" y="0.3" width="2.6" height="2.6" fill="#a6a8ab"/><rect x="10.1" y="0.3" width="2.6" height="2.6" fill="#a6a8ab"/><rect x="0.3" y="10.1" width="2.6" height="2.6" fill="#a6a8ab"/><rect x="10.1" y="10.1" width="2.6" height="2.6" fill="#a6a8ab"/></svg>
<svg style="left:1794px;top:95px;" width="14" height="14" viewBox="0 0 14 14"><circle cx="6" cy="6" r="5" fill="none" stroke="#a6a8ab" stroke-width="1.1"/><path d="M3.8,6 H8.2 M9.8,9.8 L12.8,13" stroke="#a6a8ab" stroke-width="1.1"/></svg>
<svg style="left:1820px;top:95px;" width="14" height="14" viewBox="0 0 14 14"><circle cx="6" cy="6" r="5" fill="none" stroke="#a6a8ab" stroke-width="1.1"/><path d="M3.8,6 H8.2 M6,3.8 V8.2 M9.8,9.8 L12.8,13" stroke="#a6a8ab" stroke-width="1.1"/></svg>
<svg style="left:1846px;top:95px;" width="12" height="12" viewBox="0 0 12 12"><rect x="0.6" y="0.6" width="10.8" height="10.8" fill="none" stroke="#a6a8ab" stroke-width="1.2"/><path d="M3,5.6 V3 H5.6 M9,6.4 V9 H6.4" fill="none" stroke="#a6a8ab" stroke-width="1.1"/></svg>
<div class="t" style="left:1869px;top:91px;font-size:15.5px;line-height:20px;height:20px;color:#a6a8ab;transform:scaleX(0.68);transform-origin:0 50%">1:1</div>
<div style="left:1368px;top:117px;width:528px;height:26px;background:#22252e"></div>
<svg style="left:1383px;top:123.5px;" width="13" height="13" viewBox="0 0 13 13"><circle cx="6.5" cy="6.5" r="6.4" fill="#9c9c9c"/><rect x="5.9" y="5.4" width="1.3" height="4.6" fill="#ffffff"/><rect x="5.9" y="3" width="1.3" height="1.4" fill="#ffffff"/></svg>
<div class="t" style="left:1400px;top:119.5px;font-size:14px;line-height:22px;height:22px;color:#ffffff;">Loading Previewer... Please wait.</div>
<div style="left:1368px;top:143px;width:528px;height:683px;background:#333842"></div>
<svg style="left:1554px;top:150px;" width="14" height="14" viewBox="0 0 14 14"><path d="M12,5.5 A5.2,5.2 0 0 0 3,3.6 M2,8.5 A5.2,5.2 0 0 0 11,10.4" fill="none" stroke="#c2c4c8" stroke-width="1.5"/><path d="M1.2,1.5 L1.8,5.6 L5.6,4.3 Z M12.8,12.5 L12.2,8.4 L8.4,9.7 Z" fill="#c2c4c8"/></svg>
<div class="t" style="left:1578px;top:146px;font-size:14.6px;line-height:22px;height:22px;color:#f0f0f0;">Phone (medium)</div>
<div style="left:1571px;top:177px;width:122px;height:32px;background:#3e424c;box-shadow:0 1px 4px rgba(0,0,0,.25)"></div>
<div style="left:1611px;top:177px;width:1px;height:32px;background:#30343d"></div>
<div style="left:1652px;top:177px;width:1px;height:32px;background:#30343d"></div>
<svg style="left:1583px;top:185px;" width="16" height="16" viewBox="0 0 16 16"><path d="M13.5,1.5 V14.5 L1.5,8 Z" fill="none" stroke="#70747d" stroke-width="1.2"/></svg>
<svg style="left:1621px;top:183px;" width="22" height="20" viewBox="0 0 22 20"><rect x="1.5" y="2.5" width="8" height="15" rx="1.5" fill="none" stroke="#666a73" stroke-width="1.1"/><path d="M4.5,15.5 H6.5" stroke="#666a73" stroke-width="1"/><path d="M12,8.5 H18 Q20.5,8.5 20.5,11 V15 Q20.5,17.5 18,17.5 H12" fill="none" stroke="#666a73" stroke-width="1.1"/></svg>
<svg style="left:1663px;top:191px;" width="20" height="4" viewBox="0 0 20 4"><circle cx="2" cy="2" r="1.3" fill="#7b7f88"/><circle cx="9.5" cy="2" r="1.3" fill="#7b7f88"/><circle cx="17" cy="2" r="1.3" fill="#7b7f88"/></svg>
<div style="left:1745px;top:332px;width:6px;height:64px;background:#1b1b1c;border-radius:0 3px 3px 0"></div>
<div style="left:1745px;top:407px;width:6px;height:32px;background:#1b1b1c;border-radius:0 3px 3px 0"></div>
<div style="left:1518px;top:237px;width:228px;height:477px;background:linear-gradient(135deg,#4a4a4a 0,#2a2a2a 6%,#1c1c1d 13%,#1c1c1d 87%,#2e2e2e 94%,#6a6a6a 100%);border-radius:11px;box-shadow:0 0 0 0.5px #2a2c30"></div>
<div style="left:1526px;top:246px;width:212px;height:461px;background:#fff;border-radius:5px;overflow:hidden"><div style="left:0.0px;top:0;width:26.86px;height:29.5px;background:#a52a2a"></div><div class="t" style="left:0.0px;top:8px;font-size:8.5px;line-height:12px;color:#23252b">8</div><div style="left:26.56px;top:0;width:26.86px;height:29.5px;background:#0000ff"></div><div class="t" style="left:26.56px;top:8px;font-size:8.5px;line-height:12px;color:#23252b">7</div><div style="left:53.12px;top:0;width:26.87px;height:29.5px;background:#808080"></div><div class="t" style="left:53.12px;top:8px;font-size:8.5px;line-height:12px;color:#23252b">6</div><div style="left:79.69px;top:0;width:26.860000000000003px;height:29.5px;background:#ffc0cb"></div><div class="t" style="left:79.69px;top:8px;font-size:8.5px;line-height:12px;color:#23252b">5</div><div style="left:106.25px;top:0;width:26.860000000000003px;height:29.5px;background:#008000"></div><div class="t" style="left:106.25px;top:8px;font-size:8.5px;line-height:12px;color:#23252b">4</div><div style="left:132.81px;top:0;width:26.869999999999994px;height:29.5px;background:#ffff00"></div><div class="t" style="left:132.81px;top:8px;font-size:8.5px;line-height:12px;color:#23252b">3</div><div style="left:159.38px;top:0;width:26.860000000000003px;height:29.5px;background:#ffa500"></div><div class="t" style="left:159.38px;top:8px;font-size:8.5px;line-height:12px;color:#23252b">2</div><div style="left:185.94px;top:0;width:26.860000000000003px;height:29.5px;background:#ff0000"></div><div class="t" style="left:185.94px;top:8px;font-size:8.5px;line-height:12px;color:#23252b">1</div><div class="t" style="left:30px;top:108px;font-size:22.5px;line-height:30px;color:#fa1c1c;font-family:'Liberation Sans','Noto Sans CJK SC',sans-serif">反</div></div>
<svg style="left:1453px;top:300px;" width="275" height="16" viewBox="0 0 275 16"><defs><linearGradient id="ag" x1="0" x2="1" y1="0" y2="0"><stop offset="0" stop-color="#fa1c1c"/><stop offset="0.55" stop-color="#fa1c1c"/><stop offset="1" stop-color="#fa1c1c" stop-opacity="0"/></linearGradient></defs><path d="M9,5.6 L272,7.3 L272,8.3 L9,10.2 Z" fill="url(#ag)"/><path d="M0.3,7.9 L11.8,0.8 L9.2,7.9 L11.8,15 Z" fill="#fa1c1c"/></svg>
<div style="left:1896px;top:58px;width:22px;height:768px;background:#3c3f41"></div>
<div style="left:1896px;top:58px;width:1px;height:768px;background:#323232"></div>
<div style="left:1897px;top:165px;width:21px;height:70px;background:#2d2f30"></div>
<svg style="left:1901px;top:68px;" width="13" height="14" viewBox="0 0 13 14"><path d="M6,2 Q10,2 10,7 V9.5 L11.5,11.5 H0.5 L2,9.5 V7 Q2,2 6,2 Z" fill="#afb1b3"/><path d="M4.3,12.5 H7.7 Q6,14.8 4.3,12.5 Z" fill="#afb1b3"/><circle cx="10.5" cy="2.8" r="2.4" fill="#3592c4"/></svg>
<div class="t" style="left:1855.2px;top:110.0px;width:100px;height:20px;text-align:center;font-size:12.6px;line-height:20px;color:#bbbbbb;transform:rotate(90deg);">Notifications</div>
<svg style="left:1900px;top:176px;" width="14" height="10" viewBox="0 0 14 10"><path d="M0.7,5 Q7,-1.8 13.3,5 Q7,11.8 0.7,5 Z" fill="none" stroke="#d5d5d5" stroke-width="1.3"/><circle cx="7" cy="5" r="2.1" fill="#d5d5d5"/></svg>
<div class="t" style="left:1855.6px;top:198.0px;width:100px;height:20px;text-align:center;font-size:11px;line-height:20px;color:#f0f0f0;transform:rotate(90deg);">预览器</div>
<div style="left:0px;top:826px;width:1918px;height:1px;background:#323232"></div>
<div style="left:0px;top:827px;width:1918px;height:22px;background:#3c3f41"></div>
<svg style="left:34px;top:832px;" width="16" height="14" viewBox="0 0 16 14"><path d="M3.5,1.5 V12.5 M3.5,9 Q9.5,9 9.5,4.5" stroke="#afb1b3" stroke-width="1.5" fill="none"/><circle cx="3.5" cy="2.5" r="1.8" fill="#afb1b3"/><circle cx="3.5" cy="11.5" r="1.8" fill="#afb1b3"/><circle cx="9.5" cy="3.8" r="1.8" fill="#afb1b3"/></svg>
<div class="t" style="left:50px;top:829px;font-size:11px;line-height:20px;height:20px;color:#bbbbbb;">版本控制</div>
<svg style="left:114px;top:832px;" width="16" height="14" viewBox="0 0 16 14"><path d="M1.5,1.5 L10.5,7 L1.5,12.5 Z" fill="#afb1b3"/></svg>
<div class="t" style="left:130px;top:829px;font-size:11.45px;line-height:20px;height:20px;color:#bbbbbb;">Run</div>
<svg style="left:171px;top:832px;" width="16" height="14" viewBox="0 0 16 14"><path d="M4,2 H11.5 M4,6 H11.5 M4,10 H11.5" stroke="#afb1b3" stroke-width="2"/><path d="M0.5,2 H2.5 M0.5,6 H2.5 M0.5,10 H2.5" stroke="#afb1b3" stroke-width="2"/></svg>
<div class="t" style="left:187px;top:829px;font-size:11.45px;line-height:20px;height:20px;color:#bbbbbb;">TODO</div>
<svg style="left:238px;top:832px;" width="16" height="14" viewBox="0 0 16 14"><rect x="0.5" y="1.5" width="12" height="11" fill="#afb1b3"/><path d="M3,5 H10 M3,8 H8" stroke="#3c3f41" stroke-width="1.3"/><path d="M3,0 V3 M10,0 V3" stroke="#afb1b3" stroke-width="1.6"/></svg>
<div class="t" style="left:255px;top:829px;font-size:11px;line-height:20px;height:20px;color:#bbbbbb;">日志</div>
<svg style="left:296px;top:832px;" width="16" height="14" viewBox="0 0 16 14"><circle cx="5.5" cy="6" r="5.3" fill="#afb1b3"/><rect x="4.8" y="2.8" width="1.5" height="4.2" fill="#3c3f41"/><rect x="4.8" y="8" width="1.5" height="1.5" fill="#3c3f41"/></svg>
<div class="t" style="left:312px;top:829px;font-size:11px;line-height:20px;height:20px;color:#bbbbbb;">问题</div>
<svg style="left:353px;top:832px;" width="16" height="14" viewBox="0 0 16 14"><rect x="0" y="1" width="11.5" height="10.5" fill="#afb1b3"/><path d="M2,3.5 L4.8,6 L2,8.5" stroke="#3c3f41" stroke-width="1.3" fill="none"/><path d="M6,9 H9.5" stroke="#3c3f41" stroke-width="1.3"/></svg>
<div class="t" style="left:369px;top:829px;font-size:11px;line-height:20px;height:20px;color:#bbbbbb;">终端</div>
<svg style="left:409px;top:832px;" width="16" height="14" viewBox="0 0 16 14"><path d="M3.5,0.8 H9.5 L12.8,6.5 L9.5,12.2 H3.5 L0.2,6.5 Z" fill="#afb1b3"/><path d="M5,3.6 L9.6,6.5 L5,9.4 Z" fill="#3c3f41"/></svg>
<div class="t" style="left:426px;top:829px;font-size:11px;line-height:20px;height:20px;color:#bbbbbb;">服务</div>
<svg style="left:466px;top:832px;" width="16" height="14" viewBox="0 0 16 14"><path d="M1,11 A7,7 0 0 1 15,11" stroke="#afb1b3" stroke-width="1.6" fill="none" transform="translate(0,-0.5)"/><path d="M8,10.5 L11.5,4.5" stroke="#afb1b3" stroke-width="1.6"/></svg>
<div class="t" style="left:486px;top:829px;font-size:11.45px;line-height:20px;height:20px;color:#bbbbbb;">Profiler</div>
<svg style="left:545px;top:832px;" width="16" height="14" viewBox="0 0 16 14"><circle cx="6" cy="6" r="5" fill="none" stroke="#afb1b3" stroke-width="1.6"/><path d="M9.8,9.8 L13.5,13.2" stroke="#afb1b3" stroke-width="2"/><path d="M5,4 L3.3,6 L5,8 M7,4 L8.7,6 L7,8" stroke="#afb1b3" stroke-width="1" fill="none"/></svg>
<div class="t" style="left:563px;top:829px;font-size:11.45px;line-height:20px;height:20px;color:#bbbbbb;">Code Linter</div>
<svg style="left:645px;top:832px;" width="16" height="14" viewBox="0 0 16 14"><rect x="0.6" y="1.6" width="9.8" height="10.8" fill="none" stroke="#85878a" stroke-width="1.1"/><path d="M3,5 H8 M3,7.5 H8 M3,10 H6" stroke="#85878a" stroke-width="1"/><path d="M3,0 V2.5 M8,0 V2.5" stroke="#85878a" stroke-width="1.1"/></svg>
<div class="t" style="left:661px;top:829px;font-size:11px;line-height:20px;height:20px;color:#bbbbbb;">预览器日志</div>
<div style="left:0px;top:849px;width:1918px;height:1px;background:#494b4d"></div>
<div style="left:0px;top:850px;width:1918px;height:21px;background:#3c3f41"></div>
<svg style="left:6px;top:853px;" width="13" height="13" viewBox="0 0 13 13"><rect x="2.5" y="0.5" width="10" height="10" fill="none" stroke="#9da0a3" stroke-width="1"/><path d="M0.5,2.5 V12.5 H10.5" fill="none" stroke="#9da0a3" stroke-width="1"/></svg>
<div class="t" style="left:27px;top:850px;font-size:13px;line-height:20px;height:20px;color:#bbbbbb;">Sync project finished in 10 s 38 ms (today 11:33)</div>
<div style="left:1694px;top:853px;width:13px;height:13px;background:#36ab3a;border-radius:50%"></div>
<div class="t" style="left:1718px;top:850px;font-size:12.4px;line-height:20px;height:20px;color:#a3b0bd;">7:151</div>
<div class="t" style="left:1762px;top:850px;font-size:12.4px;line-height:20px;height:20px;color:#a3b0bd;">LF</div>
<div class="t" style="left:1785px;top:850px;font-size:12.4px;line-height:20px;height:20px;color:#a3b0bd;">UTF-8</div>
<div class="t" style="left:1832px;top:850px;font-size:12.4px;line-height:20px;height:20px;color:#a3b0bd;">2 spaces</div>
<svg style="left:1892px;top:853px;" width="12" height="13" viewBox="0 0 12 13"><rect x="1" y="6" width="10" height="7" fill="#afb1b3"/><path d="M3,6 V3.5 Q3,1 6,1 Q8.5,1 9,2.8" stroke="#afb1b3" stroke-width="1.4" fill="none"/></svg>
<div style="left:0px;top:871px;width:1918px;height:47px;background:linear-gradient(90deg,#1f1a33 0,#251736 18%,#30133f 30%,#3b1250 40%,#41144c 52%,#46153f 62%,#49162b 72%,#4b1a1d 82%,#471a1a 92%,#3a1716 100%)"></div>
<div style="left:0px;top:870px;width:1918px;height:1px;background:#2c2230"></div>
<svg style="left:20px;top:884px;" width="24" height="22" viewBox="0 0 24 22"><rect x="0.5" y="3" width="17" height="15" rx="2" fill="#f0552f"/><rect x="17" y="7" width="4" height="11" rx="1" fill="#c93a1c"/><rect x="3" y="6.5" width="12" height="3" fill="#ffd9c4"/><rect x="3" y="11.5" width="5" height="4.5" fill="#ffd9c4"/><rect x="10" y="11.5" width="5" height="1.8" fill="#ffd9c4"/><rect x="10" y="14.4" width="5" height="1.6" fill="#ffd9c4"/></svg>
<div style="left:30px;top:876px;width:16px;height:16px;background:#f58a98;border-radius:50%"></div>
<div class="t" style="left:30px;top:876px;font-size:11px;line-height:16px;height:16px;color:#20131c;width:16px;text-align:center">1</div>
<div class="t" style="left:51px;top:878.5px;font-size:12px;line-height:16px;height:16px;color:#ffffff;">今日</div>
<div class="t" style="left:51px;top:894.5px;font-size:12px;line-height:16px;height:16px;color:#d8d2dc;">热点</div>
<div style="left:616px;top:883px;width:11px;height:11px;background:#5fd0f8"></div>
<div style="left:628px;top:883px;width:11px;height:11px;background:#3fc0f6"></div>
<div style="left:616px;top:895px;width:11px;height:11px;background:#35b2f3"></div>
<div style="left:628px;top:895px;width:11px;height:11px;background:#1e9eee"></div>
<div style="left:652px;top:878px;width:220px;height:32px;background:rgba(255,255,255,0.16);border-radius:16px;border:1px solid rgba(255,255,255,0.08)"></div>
<svg style="left:663px;top:886px;" width="16" height="16" viewBox="0 0 16 16"><circle cx="6.5" cy="6.5" r="5" fill="none" stroke="#e8e2ec" stroke-width="1.6"/><path d="M10.2,10.2 L14.5,14.5" stroke="#e8e2ec" stroke-width="1.8"/></svg>
<div class="t" style="left:689px;top:884px;font-size:13.5px;line-height:20px;height:20px;color:#ece6f0;">搜索</div>
<svg style="left:884px;top:883px;" width="24" height="22" viewBox="0 0 24 22"><rect x="0" y="6" width="17" height="15" rx="1.5" fill="#6a6a6c"/><rect x="6" y="0" width="18" height="15" rx="1.5" fill="#f2f2f2"/><rect x="6" y="6" width="11" height="9" fill="#b8b8ba"/></svg>
<svg style="left:928px;top:882px;" width="24" height="22" viewBox="0 0 24 22"><path d="M0,2 Q0,0.5 1.5,0.5 H8 L10.5,3 H22.5 Q24,3 24,4.5 V20 Q24,21.5 22.5,21.5 H1.5 Q0,21.5 0,20 Z" fill="#f7b928"/><path d="M0,6 H24 V20 Q24,21.5 22.5,21.5 H1.5 Q0,21.5 0,20 Z" fill="#ffd75e"/><rect x="5" y="14.5" width="14" height="7" rx="1.5" fill="#1a7fd4"/><rect x="8" y="17" width="8" height="2" rx="1" fill="#5cb3f2"/></svg>
<svg style="left:972px;top:882px;" width="24" height="24" viewBox="0 0 24 24"><defs><linearGradient id="eg" x1="0" y1="0" x2="0.6" y2="1"><stop offset="0" stop-color="#36c6f0"/><stop offset="0.5" stop-color="#1b9de2"/><stop offset="1" stop-color="#0c59a4"/></linearGradient><linearGradient id="eg2" x1="0" y1="0" x2="1" y2="0.3"><stop offset="0" stop-color="#33bdf0"/><stop offset="0.55" stop-color="#3fcf9a"/><stop offset="1" stop-color="#74dc4e"/></linearGradient></defs><circle cx="12" cy="12" r="12" fill="url(#eg)"/><path d="M0.3,10.5 A12,12 0 0 1 24,11.5 Q24.3,17.6 17.6,17.6 Q13.6,17.4 14.6,14.2 Q16,10.6 12.4,9 Q7.6,7.4 4.6,11.4 Q2.2,15 4,19.6 A12,12 0 0 1 0.3,10.5 Z" fill="url(#eg2)"/><path d="M4.6,11.4 Q3.4,17 8.4,21 Q12.4,23.6 17.5,22.6 A12,12 0 0 1 4,19.6 Q2.2,15 4.6,11.4 Z" fill="#0b4f9a"/><path d="M9.4,12.4 Q8.6,16.4 12,19 Q15,20.6 18.4,19.6 Q21.4,18.4 22.6,16.4 Q20.6,17.8 17.6,17.6 Q13.6,17.4 14.6,14.2 Q15.2,12.4 14,10.8 Q11,9.6 9.4,12.4 Z" fill="#1565b8"/></svg>
<svg style="left:1016px;top:882px;" width="24" height="24" viewBox="0 0 24 24"><path d="M7.2,6 V2.8 Q7.2,1 9,1 H15 Q16.8,1 16.8,2.8 V6" stroke="#2a9fe8" stroke-width="1.6" fill="none"/><rect x="0.5" y="5.5" width="23" height="18" rx="3" fill="#f4f4f4"/><rect x="7" y="9.5" width="4.4" height="4.4" fill="#f25022"/><rect x="12.6" y="9.5" width="4.4" height="4.4" fill="#7fba00"/><rect x="7" y="15.1" width="4.4" height="4.4" fill="#00a4ef"/><rect x="12.6" y="15.1" width="4.4" height="4.4" fill="#ffb900"/></svg>
<svg style="left:1060px;top:882px;" width="24" height="24" viewBox="0 0 24 24"><path d="M17.5,0.8 L23.5,3.6 V20.4 L17.5,23.2 L4,12 Z" fill="#0a84d8"/><path d="M17.5,0.8 V23.2 L23.5,20.4 V3.6 Z" fill="#2aa4f0"/><path d="M1,8 L3.2,6.2 L17.5,17.5 V23.2 Z" fill="#0a7acc"/><path d="M1,16 L3.2,17.8 L17.5,6.5 V0.8 Z" fill="#0a84d8"/><path d="M17.5,6.8 V17.2 L10.8,12 Z" fill="#42144a"/></svg>
<svg style="left:1104px;top:882px;" width="24" height="24" viewBox="0 0 24 24"><path d="M1,6 L8,0.5 L17,4 L11,13 Z" fill="#fc3b7a"/><path d="M14,1.5 L23.5,7.5 L19,20 L11,12 Z" fill="#1c8df2"/><path d="M0.5,10 L9,12 L8,23 L2.5,20 Z" fill="#fc7c2a"/><path d="M8,14 L20,16 L14.5,23.5 L8,22.5 Z" fill="#b54bf0"/><rect x="4.5" y="4.5" width="15" height="15" fill="#0a0a0a"/><rect x="6.2" y="16" width="5.6" height="1.2" fill="#ffffff"/></svg><div class="t" style="left:1110px;top:888px;font-size:7.5px;line-height:9px;color:#fff;font-weight:bold;font-family:'Liberation Mono',monospace">IJ</div>
<svg style="left:1148px;top:882px;" width="24" height="24" viewBox="0 0 24 24"><path d="M1,3 L12,0.5 L22,5 L10,13 Z" fill="#21d789"/><path d="M13,2 L23.5,8 L21,21 L12,12 Z" fill="#9775f8"/><path d="M0.5,7 L9,12 L9.5,23 L3,20.5 Z" fill="#22c7d8"/><path d="M8,14 L21,16 L16,23.5 L8,22.5 Z" fill="#f24bc9"/><rect x="4.5" y="4.5" width="15" height="15" fill="#0a0a0a"/><rect x="6.2" y="16" width="5.6" height="1.2" fill="#ffffff"/></svg><div class="t" style="left:1154px;top:888px;font-size:7.5px;line-height:9px;color:#fff;font-weight:bold;font-family:'Liberation Sans',sans-serif">DG</div>
<svg style="left:1192px;top:884px;" width="24" height="20" viewBox="0 0 24 20"><rect x="0" y="0" width="24" height="20" rx="1.5" fill="#2c2c2c"/><rect x="0" y="0" width="24" height="3.5" fill="#8a8a8a"/><path d="M3.5,8 L8,11.5 L3.5,15" stroke="#f0f0f0" stroke-width="1.8" fill="none"/><path d="M10.5,15.5 H17" stroke="#f0f0f0" stroke-width="1.8"/></svg>
<svg style="left:1236px;top:882px;" width="24" height="24" viewBox="0 0 24 24"><circle cx="12" cy="12" r="12" fill="#db4437"/><path d="M12,12 L1.6,6 A12,12 0 0 0 9.5,23.7 L15,14 Z" fill="#0f9d58"/><path d="M12,12 L15,14 L9.5,23.7 A12,12 0 0 0 22.4,6 H12 Z" fill="#ffcd40"/><circle cx="12" cy="12" r="5.4" fill="#f1f1f1"/><circle cx="12" cy="12" r="4.3" fill="#4285f4"/></svg>
<div style="left:1248.5px;top:877.5px;width:16px;height:16px;background:#5d4037;border-radius:50%"></div>
<div class="t" style="left:1248.5px;top:877.5px;font-size:9.5px;line-height:16px;height:16px;color:#efe6e2;width:16px;text-align:center">M</div>
<div style="left:1272px;top:874px;width:40px;height:40px;background:rgba(255,255,255,0.09);border-radius:4px;border:1px solid rgba(255,255,255,0.07)"></div>
<svg style="left:1280px;top:883.7px;" width="24" height="19.9" viewBox="0 0 16.4 13.6"><defs><linearGradient id="lgA2" x1="0.6" y1="0" x2="0.2" y2="1"><stop offset="0" stop-color="#3ee0f2"/><stop offset="1" stop-color="#1896cc"/></linearGradient><linearGradient id="lgB2" x1="0" y1="0.3" x2="1" y2="0.8"><stop offset="0" stop-color="#2496e6"/><stop offset="0.5" stop-color="#2b6fe0"/><stop offset="1" stop-color="#2a62d8"/></linearGradient></defs><path d="M8.2,0 L7.2,0.4 L0.2,10.4 Q-0.2,11.2 0.4,11.9 L1.6,13.3 Q1.9,13.6 2.4,13.6 H7.5 V10.2 H4.4 L8.2,4.8 Z" fill="url(#lgA2)"/><path d="M8.2,0 L9.2,0.4 L16.2,10.4 Q16.6,11.2 16,11.9 L14.8,13.3 Q14.5,13.6 14,13.6 H8.9 V10.2 H12 L8.2,4.8 Z" fill="url(#lgB2)"/></svg>
<div style="left:981px;top:910px;width:6px;height:3px;background:#8d8791;border-radius:2px"></div>
<div style="left:1069px;top:910px;width:6px;height:3px;background:#8d8791;border-radius:2px"></div>
<div style="left:1113px;top:910px;width:6px;height:3px;background:#8d8791;border-radius:2px"></div>
<div style="left:1157px;top:910px;width:6px;height:3px;background:#8d8791;border-radius:2px"></div>
<div style="left:1201px;top:910px;width:6px;height:3px;background:#8d8791;border-radius:2px"></div>
<div style="left:1245px;top:910px;width:6px;height:3px;background:#8d8791;border-radius:2px"></div>
<div style="left:937px;top:910px;width:6px;height:3px;background:#8d8791;border-radius:2px"></div>
<div style="left:1284px;top:910px;width:16px;height:3px;background:#dba2ec;border-radius:2px"></div>
<svg style="left:1701px;top:889px;" width="12" height="8" viewBox="0 0 12 8"><path d="M1,7 L6,2 L11,7" stroke="#ffffff" stroke-width="1.5" fill="none"/></svg>
<div class="t" style="left:1731px;top:883px;font-size:14px;line-height:20px;height:20px;color:#ffffff;">中</div>
<svg style="left:1763px;top:885px;" width="18" height="17" viewBox="0 0 18 17"><rect x="0.6" y="1.6" width="12" height="9.5" fill="none" stroke="#ffffff" stroke-width="1.1"/><path d="M3.5,14.5 H10 M6.8,11 V14.5" stroke="#ffffff" stroke-width="1.1"/><rect x="12" y="0.5" width="4" height="4" fill="none" stroke="#ffffff" stroke-width="0.9"/><path d="M14,4.5 V14" stroke="#ffffff" stroke-width="0.9"/></svg>
<svg style="left:1786px;top:885px;" width="20" height="16" viewBox="0 0 20 16"><path d="M1,5.5 H4 L8,2 V14 L4,10.5 H1 Z" fill="none" stroke="#ffffff" stroke-width="1.1"/><path d="M10.5,5.5 Q12,8 10.5,10.5 M12.8,3.8 Q15.4,8 12.8,12.2 M15,2 Q18.6,8 15,14" stroke="#ffffff" stroke-width="1.1" fill="none"/></svg>
<div class="t" style="left:1820px;top:877px;font-size:12.5px;line-height:18px;height:18px;color:#ffffff;width:55px;text-align:right">14:26</div>
<div class="t" style="left:1800px;top:893px;font-size:12.5px;line-height:18px;height:18px;color:#ffffff;width:75px;text-align:right">2023/12/2</div>
<svg style="left:1883px;top:886px;" width="14" height="16" viewBox="0 0 14 16"><path d="M7,1 Q11.5,1 11.5,7 V10 L13.2,12.4 H0.8 L2.5,10 V7 Q2.5,1 7,1 Z" fill="none" stroke="#ffffff" stroke-width="1.1"/><path d="M5,13.5 Q7,15.8 9,13.5" fill="none" stroke="#ffffff" stroke-width="1.1"/></svg>
<svg style="left:1749px;top:842px;opacity:0.62" width="60" height="60" viewBox="0 0 60 60"><path d="M35.3,34.9 L53.4,45.4 M36.9,32.1 L55.0,42.6" stroke="#ffffff" stroke-width="1"/><path d="M44.7,38.5 L53.6,33.8" stroke="#ffffff" stroke-width="1"/><path d="M44.7,38.5 L45.1,48.5" stroke="#ffffff" stroke-width="1"/><path d="M30.0,37.0 L30.0,58.0" stroke="#ffffff" stroke-width="3.2"/><path d="M30.0,47.0 L38.5,52.3" stroke="#ffffff" stroke-width="2.6"/><path d="M30.0,47.0 L21.5,52.3" stroke="#ffffff" stroke-width="2.6"/><path d="M23.9,33.5 L5.8,44.0" stroke="#ffffff" stroke-width="3.2"/><path d="M15.3,38.5 L14.9,48.5" stroke="#ffffff" stroke-width="2.6"/><path d="M15.3,38.5 L6.4,33.8" stroke="#ffffff" stroke-width="2.6"/><path d="M23.9,26.5 L5.8,16.0" stroke="#ffffff" stroke-width="3.2"/><path d="M15.3,21.5 L6.4,26.2" stroke="#ffffff" stroke-width="2.6"/><path d="M15.3,21.5 L14.9,11.5" stroke="#ffffff" stroke-width="2.6"/><path d="M30.0,23.0 L30.0,2.0" stroke="#ffffff" stroke-width="3.2"/><path d="M30.0,13.0 L21.5,7.7" stroke="#ffffff" stroke-width="2.6"/><path d="M30.0,13.0 L38.5,7.7" stroke="#ffffff" stroke-width="2.6"/><path d="M36.9,27.9 L55.0,17.4 M35.3,25.1 L53.4,14.6" stroke="#ffffff" stroke-width="1"/><path d="M44.7,21.5 L45.1,11.5" stroke="#ffffff" stroke-width="1"/><path d="M44.7,21.5 L53.6,26.2" stroke="#ffffff" stroke-width="1"/><polygon points="36.5,33.8 30.0,37.5 23.5,33.8 23.5,26.2 30.0,22.5 36.5,26.2" fill="none" stroke="#ffffff" stroke-width="2.6"/></svg>
<div class="t" style="left:1813px;top:842px;font-size:47px;line-height:60px;letter-spacing:1.5px;color:rgba(255,255,255,0.68);font-weight:400;font-family:'Liberation Sans','Noto Sans CJK SC',sans-serif">看雪</div>
<div style="left:1910px;top:817.5px;width:6px;height:50px;background:#42505c;border-radius:3px"></div>
<div style="left:1912px;top:831px;width:2px;height:32px;background:linear-gradient(180deg,#e8451c 0,#e2701c 60%)"></div>
<div style="left:1907px;top:860px;width:12px;height:12px;background:#e2701c;border-radius:50%;border:2px solid #42505c"></div>
</body></html>
